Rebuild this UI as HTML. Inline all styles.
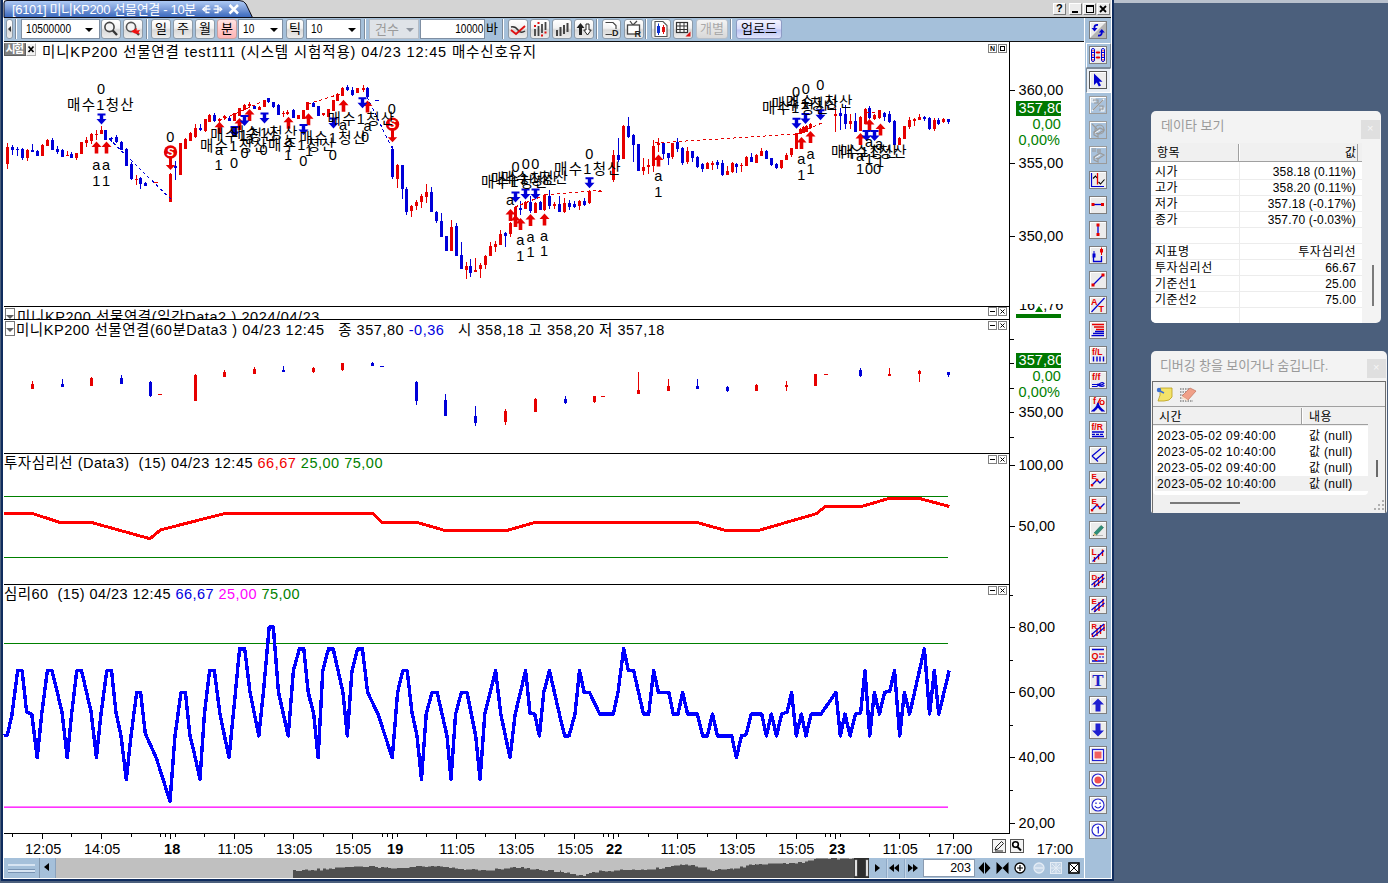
<!DOCTYPE html><html lang="ko"><head><meta charset="utf-8"><title>[6101] 미니KP200 선물연결 - 10분</title><style>
*{box-sizing:border-box}
html,body{margin:0;padding:0}
body{width:1388px;height:883px;overflow:hidden;position:relative;background:#4b5f7c;font-family:"Liberation Sans","Noto Sans CJK KR",sans-serif;font-size:12px;color:#000}
.a{position:absolute}
.t{position:absolute;white-space:nowrap;line-height:1}
.tb{position:absolute;top:19px;height:20px;border:1px solid #8c9aa8;border-radius:3px;background:linear-gradient(#ffffff,#f2f2f2 45%,#d9d9d9 55%,#ececec);text-align:center;font-size:13px;line-height:18px}
.inp{position:absolute;top:19px;height:20px;border:1px solid #7f8fa3;background:#fff;font-size:13px;line-height:18px}
.sep{position:absolute;top:19px;height:20px;width:2px;border-left:1px solid #7d8b9b;border-right:1px solid #fff}
.dd{position:absolute;width:0;height:0;border-left:4px solid transparent;border-right:4px solid transparent;border-top:4px solid #000;top:8px}
.rb{position:absolute;left:1089px;width:19px;height:19px;border:1px solid #808080;border-top-color:#fff;border-left-color:#fff;background:#e8e8e8}
.mx{position:absolute;width:9px;height:9px;border:1px solid #808080;background:#fff}
.ct{font-size:14.5px}
svg{position:absolute;left:0;top:0}
</style></head><body>
<div class="a" style="left:1114px;top:0;width:274px;height:3px;background:#b9c1cd"></div>
<div class="a" style="left:1px;top:0;width:1113px;height:881px;background:#0f2c5e"></div>
<div class="a" style="left:3px;top:0;width:1109px;height:879px;background:#fff"></div>
<div class="a" style="left:4px;top:0;width:1107px;height:17px;background:#d4d4d4"></div>
<div class="a" style="left:4px;top:17px;width:1107px;height:1px;background:#111"></div>
<div class="a" style="left:4px;top:18px;width:1080px;height:23px;background:#a5c0da"></div>
<div class="a" style="left:4px;top:41px;width:1080px;height:1px;background:#111"></div>
<div class="a" style="left:1085px;top:18px;width:26px;height:860px;background:#a5c0da"></div>
<div class="a" style="left:4px;top:858px;width:1080px;height:20px;background:#a5c0da"></div>
<svg width="260" height="18" viewBox="0 0 260 18"><defs><linearGradient id="tg" x1="0" y1="0" x2="0" y2="1"><stop offset="0" stop-color="#b0ccf6"/><stop offset="0.18" stop-color="#9dbbec"/><stop offset="0.5" stop-color="#7a9bd8"/><stop offset="0.8" stop-color="#4f7ac7"/><stop offset="1" stop-color="#3b68bd"/></linearGradient></defs><path d="M4,17.5 L4,3 Q4,0.5 7,0.5 L239,0.5 Q244,0.5 246,4 L252.5,17.5 Z" fill="url(#tg)" stroke="#0a0a14" stroke-width="1"/><g fill="none" stroke="#fff" stroke-width="1.3"><path d="M209.500,6h-3.500v6.500h3.500"/><path d="M214.500,6h3.500v6.500h-3.500"/><path d="M203,9.200h7.500M213.500,9.200h8"/><path d="M205,7.200l-2.200,2l2.200,2M219.500,7.200l2.200,2l-2.200,2"/></g><path d="M229.500,5 L238,13.500 M238,5 L229.500,13.500" stroke="#fff" stroke-width="2.500" fill="none"/></svg>
<div class="t" id="tabt" style="left:12px;top:2.5px;font-size:13px;color:#fff;letter-spacing:-0.326px">[6101] 미니KP200 선물연결 - 10분</div>
<div class="a" style="left:1053px;top:3px;width:13px;height:12px;background:#ececec;border:1px solid #fff;border-right-color:#7a7a7a;border-bottom-color:#7a7a7a"></div>
<div class="a" style="left:1069px;top:3px;width:13px;height:12px;background:#ececec;border:1px solid #fff;border-right-color:#7a7a7a;border-bottom-color:#7a7a7a"></div>
<div class="a" style="left:1083px;top:3px;width:13px;height:12px;background:#ececec;border:1px solid #fff;border-right-color:#7a7a7a;border-bottom-color:#7a7a7a"></div>
<div class="a" style="left:1097px;top:3px;width:13px;height:12px;background:#ececec;border:1px solid #fff;border-right-color:#7a7a7a;border-bottom-color:#7a7a7a"></div>
<div class="t" style="left:1056px;top:3px;font-size:11px;font-weight:bold">?</div>
<div class="a" style="left:1072px;top:11px;width:6px;height:2px;background:#000"></div>
<div class="a" style="left:1086px;top:5px;width:8px;height:8px;border:1px solid #000;border-top-width:2px"></div>
<svg width="1388" height="20" viewBox="0 0 1388 20"><path d="M1100,6 L1106,12 M1106,6 L1100,12" stroke="#000" stroke-width="1.8" fill="none"/></svg>
<div class="tb" style="left:6px;width:7px;border-radius:3px"></div>
<div class="a" style="left:8px;top:26px;width:0;height:0;border-top:3px solid transparent;border-bottom:3px solid transparent;border-right:3px solid #333"></div>
<div class="sep" style="left:15px"></div>
<div class="inp" style="left:21px;width:79px"><span class="t" style="left:3.5px;top:2.5px;font-size:12px;transform:scaleX(0.845);transform-origin:0 0" id="code">10500000</span><i class="dd" style="left:63px"></i></div>
<div class="tb" style="left:101px;width:20px;"><svg width="18" height="18" viewBox="0 0 18 18" style="left:0;top:0"><circle cx="7.5" cy="7" r="4.6" fill="#f4f4f4" stroke="#444" stroke-width="1.6"/><path d="M10.8,10.5 L15,15" stroke="#333" stroke-width="2.4"/></svg></div>
<div class="tb" style="left:123px;width:20px;"><svg width="18" height="18" viewBox="0 0 18 18" style="left:0;top:0"><circle cx="7" cy="7" r="4.6" fill="#f4f4f4" stroke="#555" stroke-width="1.6"/><path d="M10.5,10.5 L15,15" stroke="#444" stroke-width="2.2"/><path d="M7,11.5 L13,8 L12.5,10.5 L16,10 L14.5,12.5 L16,14 L11,13.5 Z" fill="#f01010"/></svg></div>
<div class="sep" style="left:146px"></div>
<div class="tb" style="left:151px;width:20px;">일</div>
<div class="tb" style="left:173px;width:20px;">주</div>
<div class="tb" style="left:195px;width:20px;">월</div>
<div class="tb" style="left:217px;width:20px;background:linear-gradient(#ffe3e3,#ffc9c9 50%,#ffb4b4);border-color:#c9a0a0">분</div>
<div class="inp" style="left:238px;width:45px"><span class="t" style="left:3.5px;top:2.5px;font-size:12px;transform:scaleX(0.845);transform-origin:0 0">10</span><i class="dd" style="left:31px"></i></div>
<div class="tb" style="left:286px;width:18px;">틱</div>
<div class="inp" style="left:306px;width:55px"><span class="t" style="left:3.5px;top:2.5px;font-size:12px;transform:scaleX(0.845);transform-origin:0 0">10</span><i class="dd" style="left:41px"></i></div>
<div class="sep" style="left:364px"></div>
<div class="inp" style="left:369px;width:50px;background:#dfe3e8;border-color:#b4bcc6"><span class="t" style="left:5px;top:3px;font-size:13px;color:#9a9a9a">건수</span><i class="dd" style="left:36px;border-top-color:#8f96a0"></i></div>
<div class="inp" style="left:420px;width:65px"><span class="t" style="right:1px;top:2.5px;font-size:12px;transform:scaleX(0.845);transform-origin:100% 0">10000</span></div>
<div class="t" style="left:486px;top:22px;font-size:13px">바</div>
<div class="sep" style="left:502px"></div>
<div class="tb" style="left:508px;width:20px;"><svg width="18" height="18" viewBox="0 0 18 18"><path d="M2,7 Q6,6 9,10 T16,11" fill="none" stroke="#333" stroke-width="1.4"/><path d="M2,10 L7,14 L16,6" fill="none" stroke="#e01010" stroke-width="1.8"/></svg></div>
<div class="tb" style="left:530px;width:20px;"><svg width="18" height="18" viewBox="0 0 18 18"><g stroke="#444" stroke-width="1.8"><path d="M4,9v7M7.5,6v10M11,4v9M14.5,2v8"/></g><g fill="#e01010"><rect x="3" y="5" width="2" height="2"/><rect x="6.5" y="2" width="2" height="2"/><rect x="10" y="14.5" width="2" height="2"/><rect x="13.5" y="11.5" width="2" height="2"/></g></svg></div>
<div class="tb" style="left:552px;width:20px;"><svg width="18" height="18" viewBox="0 0 18 18"><g stroke="#444" stroke-width="2"><path d="M4,10v6M7.5,7v9M11,5v9M14.5,3v9"/></g></svg></div>
<div class="tb" style="left:574px;width:20px;"><svg width="18" height="18" viewBox="0 0 18 18"><path d="M5.5,3 L9.5,8 H7 V15 H4 V8 H1.5 Z" fill="#222"/><path d="M12.5,15 L8.8,10 H11 V4 H14 V10 H16.2 Z" fill="#fff" stroke="#222" stroke-width="1"/></svg></div>
<div class="sep" style="left:596px"></div>
<div class="tb" style="left:602px;width:19px;"><svg width="18" height="18" viewBox="0 0 18 18"><path d="M2.5,2.5 H10 L13,5.5 V9 M9,14.5 H2.5 Z" fill="#fff" stroke="#444" stroke-width="1.2"/><text x="9" y="16" font-size="9" font-weight="bold" font-family="Liberation Sans,sans-serif" fill="#222">D</text></svg></div>
<div class="tb" style="left:624px;width:20px;"><svg width="18" height="18" viewBox="0 0 18 18"><path d="M5,1 L8,5 L12,1" fill="none" stroke="#444" stroke-width="1.2"/><rect x="2.5" y="5" width="12" height="9" fill="#fff" stroke="#444" stroke-width="1.3"/><text x="9.5" y="16.5" font-size="9" font-weight="bold" font-family="Liberation Sans,sans-serif" fill="#222">R</text></svg></div>
<div class="sep" style="left:645px"></div>
<div class="tb" style="left:651px;width:20px;"><svg width="18" height="18" viewBox="0 0 18 18"><path d="M3,1.5 H11 L15,5.5 V16.5 H3 Z" fill="#fff" stroke="#555" stroke-width="1.1"/><rect x="5" y="6" width="3" height="7" fill="#1030d0"/><path d="M6.5,3.5V15" stroke="#1030d0"/><rect x="10" y="7" width="3" height="5" fill="#e01010"/><path d="M11.5,5V14" stroke="#e01010"/></svg></div>
<div class="tb" style="left:673px;width:20px;"><svg width="18" height="18" viewBox="0 0 18 18"><rect x="2.5" y="2.5" width="11" height="10" fill="#fff" stroke="#333" stroke-width="1.2"/><path d="M2.5,6H13.5M2.5,9.5H13.5M6,2.5V12.5M10,2.5V12.5" stroke="#333" stroke-width="1"/><path d="M16.5,11.5 V16.5 H11.5 Z" fill="#e01010"/></svg></div>
<div class="tb" style="left:696px;width:32px;color:#a9a9a9;border-color:#b7bfc9;background:linear-gradient(#f3f3f3,#e6e6e6 50%,#d8d8d8)">개별</div>
<div class="sep" style="left:730px"></div>
<div class="tb" style="left:736px;width:46px;background:linear-gradient(#f4f4ff,#d9dcfb 50%,#bcc3f3 55%,#dfe3fb);border-color:#8e9bc4">업로드</div>
<div class="a" style="left:4px;top:42px;width:1080px;height:816px;background:#fff"></div>
<div class="a" style="left:4px;top:306px;width:1006px;height:1px;background:#000"></div>
<div class="a" style="left:4px;top:319px;width:1006px;height:1px;background:#000"></div>
<div class="a" style="left:4px;top:453px;width:1006px;height:1px;background:#000"></div>
<div class="a" style="left:4px;top:584px;width:1006px;height:1px;background:#000"></div>
<div class="a" style="left:4px;top:833px;width:1006px;height:1px;background:#000"></div>
<div class="a" style="left:1009px;top:42px;width:1px;height:792px;background:#000"></div>
<div class="mx" style="left:988px;top:307px"></div><div class="mx" style="left:998px;top:307px"></div>
<div class="a" style="left:990px;top:311px;width:5px;height:1px;background:#000"></div>
<svg width="1388" height="883" viewBox="0 0 1388 883" style="pointer-events:none"><path d="M1000.5,309.5 l4,4 m0,-4 l-4,4" stroke="#000" stroke-width="1" fill="none"/></svg>
<div class="mx" style="left:988px;top:321px"></div><div class="mx" style="left:998px;top:321px"></div>
<div class="a" style="left:990px;top:325px;width:5px;height:1px;background:#000"></div>
<svg width="1388" height="883" viewBox="0 0 1388 883" style="pointer-events:none"><path d="M1000.5,323.5 l4,4 m0,-4 l-4,4" stroke="#000" stroke-width="1" fill="none"/></svg>
<div class="mx" style="left:988px;top:455px"></div><div class="mx" style="left:998px;top:455px"></div>
<div class="a" style="left:990px;top:459px;width:5px;height:1px;background:#000"></div>
<svg width="1388" height="883" viewBox="0 0 1388 883" style="pointer-events:none"><path d="M1000.5,457.5 l4,4 m0,-4 l-4,4" stroke="#000" stroke-width="1" fill="none"/></svg>
<div class="mx" style="left:988px;top:586px"></div><div class="mx" style="left:998px;top:586px"></div>
<div class="a" style="left:990px;top:590px;width:5px;height:1px;background:#000"></div>
<svg width="1388" height="883" viewBox="0 0 1388 883" style="pointer-events:none"><path d="M1000.5,588.5 l4,4 m0,-4 l-4,4" stroke="#000" stroke-width="1" fill="none"/></svg>
<div class="mx" style="left:988px;top:44px"></div><div class="mx" style="left:998px;top:44px"></div>
<div class="t" style="left:990px;top:45px;font-size:7px;font-weight:bold">N</div>
<div class="a" style="left:1000px;top:46px;width:5px;height:5px;border:1px solid #000"></div>
<div class="a" style="left:4px;top:43px;width:22px;height:13px;background:#808080;border:1px solid #606060;border-top-color:#8c8c8c"></div>
<div class="t" style="left:5.5px;top:44px;font-size:11px;color:#fff;letter-spacing:-1.6px;font-weight:bold">시험</div>
<div class="a" style="left:26px;top:43px;width:10px;height:13px;background:#f2f2f2;border:1px solid #b0b0b0;border-top-color:#fff;border-left-color:#fff"></div>
<svg width="40" height="60" viewBox="0 0 40 60"><path d="M28.5,46.5 l5,5.500 m0,-5.500 l-5,5.500" stroke="#000" stroke-width="1.700" fill="none"/></svg>
<div class="t" id="t1" style="left:42px;top:44.8px;font-size:14.5px;color:#000;letter-spacing:0.843px;">미니KP200 선물연결 test111 (시스템 시험적용) 04/23 12:45 매수신호유지</div>
<div class="a" style="left:4px;top:307px;width:980px;height:12px;overflow:hidden"><div class="t" style="left:13px;top:2.5px;font-size:14.5px;letter-spacing:0.598px" id="t2">미니KP200 선물연결(일간Data2 ) 2024/04/23</div><div class="a" style="left:1px;top:1px;width:10px;height:14px;border:1px solid #777;background:#fff"></div><div class="a" style="left:2px;top:8px;width:0;height:0;border-left:4px solid transparent;border-right:4px solid transparent;border-top:4px solid #606060"></div></div>
<div class="a" style="left:5px;top:321px;width:10px;height:15px;border:1px solid #777;background:#fff"></div><div class="a" style="left:6px;top:328px;width:0;height:0;border-left:4px solid transparent;border-right:4px solid transparent;border-top:4.500px solid #606060"></div>
<div class="t" id="t3" style="left:16px;top:322.8px;font-size:14.5px;color:#000;letter-spacing:0.527px;">미니KP200 선물연결(60분Data3 ) 04/23 12:45&nbsp;&nbsp; 종 357,80 <span style="color:#0000e0">-0,36</span>&nbsp;&nbsp; 시 358,18 고 358,20 저 357,18</div>
<div class="t" id="t4" style="left:4px;top:456.2px;font-size:14.5px;color:#000;letter-spacing:0.499px;">투자심리선 (Data3) &nbsp;(15) 04/23 12:45 <span style="color:#f00000">66,67</span> <span style="color:#008000">25,00</span> <span style="color:#008000">75,00</span></div>
<div class="t" id="t5" style="left:4px;top:587.2px;font-size:14.5px;color:#000;letter-spacing:0.443px;">심리60 &nbsp;(15) 04/23 12:45 <span style="color:#0000e0">66,67</span> <span style="color:#ff00ff">25,00</span> <span style="color:#008000">75,00</span></div>
<div class="t" style="left:1018.5px;top:82.8px;font-size:14.5px;letter-spacing:0.1px;color:#000">360,00</div>
<div class="a" style="left:1010px;top:90px;width:5px;height:1px;background:#000"></div>
<div class="t" style="left:1018.5px;top:155.8px;font-size:14.5px;letter-spacing:0.1px;color:#000">355,00</div>
<div class="a" style="left:1010px;top:163px;width:5px;height:1px;background:#000"></div>
<div class="t" style="left:1018.5px;top:228.8px;font-size:14.5px;letter-spacing:0.1px;color:#000">350,00</div>
<div class="a" style="left:1010px;top:236px;width:5px;height:1px;background:#000"></div>
<div class="a" style="left:1016px;top:101px;width:45px;height:15px;background:#007800"></div>
<div class="t" style="left:1018.5px;top:100.8px;font-size:14.5px;letter-spacing:0.1px;color:#fff">357,80</div>
<div class="t" style="right:327px;top:116.8px;font-size:14.5px;letter-spacing:0.1px;color:#008000">0,00</div>
<div class="t" style="left:1018.5px;top:132.8px;font-size:14.5px;letter-spacing:0.1px;color:#008000">0,00%</div>
<div class="a" style="left:1012px;top:304px;width:60px;height:8.5px;overflow:hidden"><div class="t" style="left:7px;top:-6px;font-size:14.5px">162,76</div></div>
<div class="a" style="left:1016px;top:314px;width:45px;height:4px;background:#007800"></div>
<div class="a" style="left:1035px;top:305px;width:9px;height:8px;background:#fff"></div><div class="a" style="left:1035px;top:306px;width:0;height:0;border-left:4px solid transparent;border-right:4px solid transparent;border-bottom:6px solid #008000"></div>
<div class="a" style="left:1010px;top:339px;width:4px;height:1px;background:#000"></div>
<div class="a" style="left:1010px;top:363px;width:4px;height:1px;background:#000"></div>
<div class="a" style="left:1010px;top:388px;width:4px;height:1px;background:#000"></div>
<div class="a" style="left:1010px;top:412px;width:4px;height:1px;background:#000"></div>
<div class="a" style="left:1010px;top:437px;width:4px;height:1px;background:#000"></div>
<div class="a" style="left:1016px;top:353px;width:45px;height:15px;background:#007800"></div>
<div class="t" style="left:1018.5px;top:352.8px;font-size:14.5px;letter-spacing:0.1px;color:#fff">357,80</div>
<div class="t" style="right:327px;top:368.8px;font-size:14.5px;letter-spacing:0.1px;color:#008000">0,00</div>
<div class="t" style="left:1018.5px;top:384.8px;font-size:14.5px;letter-spacing:0.1px;color:#008000">0,00%</div>
<div class="t" style="left:1018.5px;top:404.8px;font-size:14.5px;letter-spacing:0.1px;color:#000">350,00</div>
<div class="t" style="left:1018.5px;top:457.8px;font-size:14.5px;letter-spacing:0.1px;color:#000">100,00</div>
<div class="a" style="left:1010px;top:465px;width:5px;height:1px;background:#000"></div>
<div class="t" style="left:1018.5px;top:518.8px;font-size:14.5px;letter-spacing:0.1px;color:#000">50,00</div>
<div class="a" style="left:1010px;top:526px;width:5px;height:1px;background:#000"></div>
<div class="t" style="display:none"></div>
<div class="t" style="left:1018.5px;top:619.8px;font-size:14.5px;letter-spacing:0.1px;color:#000">80,00</div>
<div class="a" style="left:1010px;top:627px;width:5px;height:1px;background:#000"></div>
<div class="t" style="left:1018.5px;top:684.8px;font-size:14.5px;letter-spacing:0.1px;color:#000">60,00</div>
<div class="a" style="left:1010px;top:692px;width:5px;height:1px;background:#000"></div>
<div class="t" style="left:1018.5px;top:749.8px;font-size:14.5px;letter-spacing:0.1px;color:#000">40,00</div>
<div class="a" style="left:1010px;top:757px;width:5px;height:1px;background:#000"></div>
<div class="t" style="left:1018.5px;top:815.8px;font-size:14.5px;letter-spacing:0.1px;color:#000">20,00</div>
<div class="a" style="left:1010px;top:823px;width:5px;height:1px;background:#000"></div>
<div class="a" style="left:1010px;top:595px;width:3px;height:1px;background:#000"></div>
<div class="a" style="left:1010px;top:660px;width:3px;height:1px;background:#000"></div>
<div class="a" style="left:1010px;top:725px;width:3px;height:1px;background:#000"></div>
<div class="a" style="left:1010px;top:790px;width:3px;height:1px;background:#000"></div>
<div class="t" style="left:43.2px;transform:translateX(-50%);top:841.8px;font-size:14.5px;color:#000;">12:05</div>
<div class="t" style="left:102.2px;transform:translateX(-50%);top:841.8px;font-size:14.5px;color:#000;">14:05</div>
<div class="t" style="left:172.2px;transform:translateX(-50%);top:841.8px;font-size:14.5px;color:#000;font-weight:bold;">18</div>
<div class="t" style="left:235.2px;transform:translateX(-50%);top:841.8px;font-size:14.5px;color:#000;">11:05</div>
<div class="t" style="left:294.2px;transform:translateX(-50%);top:841.8px;font-size:14.5px;color:#000;">13:05</div>
<div class="t" style="left:353.2px;transform:translateX(-50%);top:841.8px;font-size:14.5px;color:#000;">15:05</div>
<div class="t" style="left:395.2px;transform:translateX(-50%);top:841.8px;font-size:14.5px;color:#000;font-weight:bold;">19</div>
<div class="t" style="left:457.2px;transform:translateX(-50%);top:841.8px;font-size:14.5px;color:#000;">11:05</div>
<div class="t" style="left:516.2px;transform:translateX(-50%);top:841.8px;font-size:14.5px;color:#000;">13:05</div>
<div class="t" style="left:575.2px;transform:translateX(-50%);top:841.8px;font-size:14.5px;color:#000;">15:05</div>
<div class="t" style="left:614.2px;transform:translateX(-50%);top:841.8px;font-size:14.5px;color:#000;font-weight:bold;">22</div>
<div class="t" style="left:678.2px;transform:translateX(-50%);top:841.8px;font-size:14.5px;color:#000;">11:05</div>
<div class="t" style="left:737.2px;transform:translateX(-50%);top:841.8px;font-size:14.5px;color:#000;">13:05</div>
<div class="t" style="left:796.2px;transform:translateX(-50%);top:841.8px;font-size:14.5px;color:#000;">15:05</div>
<div class="t" style="left:837.2px;transform:translateX(-50%);top:841.8px;font-size:14.5px;color:#000;font-weight:bold;">23</div>
<div class="t" style="left:900.2px;transform:translateX(-50%);top:841.8px;font-size:14.5px;color:#000;">11:05</div>
<div class="t" style="left:954.2px;transform:translateX(-50%);top:841.8px;font-size:14.5px;color:#000;">17:00</div>
<div class="t" style="left:1055px;transform:translateX(-50%);top:841.8px;font-size:14.5px;color:#000;">17:00</div>
<svg width="1388" height="883" viewBox="0 0 1388 883" shape-rendering="crispEdges"><rect x="42" y="834" width="1" height="5" fill="#000"/><rect x="101" y="834" width="1" height="5" fill="#000"/><rect x="170" y="834" width="1" height="5" fill="#000"/><rect x="234" y="834" width="1" height="5" fill="#000"/><rect x="293" y="834" width="1" height="5" fill="#000"/><rect x="352" y="834" width="1" height="5" fill="#000"/><rect x="392" y="834" width="1" height="5" fill="#000"/><rect x="456" y="834" width="1" height="5" fill="#000"/><rect x="515" y="834" width="1" height="5" fill="#000"/><rect x="574" y="834" width="1" height="5" fill="#000"/><rect x="613" y="834" width="1" height="5" fill="#000"/><rect x="677" y="834" width="1" height="5" fill="#000"/><rect x="736" y="834" width="1" height="5" fill="#000"/><rect x="796" y="834" width="1" height="5" fill="#000"/><rect x="835" y="834" width="1" height="5" fill="#000"/><rect x="899" y="834" width="1" height="5" fill="#000"/><rect x="953" y="834" width="1" height="5" fill="#000"/><rect x="12" y="834" width="1" height="3" fill="#000"/><rect x="71" y="834" width="1" height="3" fill="#000"/><rect x="131" y="834" width="1" height="3" fill="#000"/><rect x="160" y="834" width="1" height="3" fill="#000"/><rect x="165" y="834" width="1" height="3" fill="#000"/><rect x="175" y="834" width="1" height="3" fill="#000"/><rect x="204" y="834" width="1" height="3" fill="#000"/><rect x="264" y="834" width="1" height="3" fill="#000"/><rect x="323" y="834" width="1" height="3" fill="#000"/><rect x="382" y="834" width="1" height="3" fill="#000"/><rect x="387" y="834" width="1" height="3" fill="#000"/><rect x="397" y="834" width="1" height="3" fill="#000"/><rect x="426" y="834" width="1" height="3" fill="#000"/><rect x="485" y="834" width="1" height="3" fill="#000"/><rect x="544" y="834" width="1" height="3" fill="#000"/><rect x="603" y="834" width="1" height="3" fill="#000"/><rect x="608" y="834" width="1" height="3" fill="#000"/><rect x="618" y="834" width="1" height="3" fill="#000"/><rect x="648" y="834" width="1" height="3" fill="#000"/><rect x="707" y="834" width="1" height="3" fill="#000"/><rect x="766" y="834" width="1" height="3" fill="#000"/><rect x="825" y="834" width="1" height="3" fill="#000"/><rect x="830" y="834" width="1" height="3" fill="#000"/><rect x="840" y="834" width="1" height="3" fill="#000"/><rect x="869" y="834" width="1" height="3" fill="#000"/><rect x="929" y="834" width="1" height="3" fill="#000"/><rect x="7" y="143.0" width="1" height="25.6" fill="#e60000"/><rect x="6" y="147.3" width="3" height="17.0" fill="#e60000"/><rect x="12" y="144.8" width="1" height="10.2" fill="#0000d8"/><rect x="11" y="147.3" width="3" height="2.9" fill="#0000d8"/><rect x="17" y="146.5" width="1" height="9.3" fill="#0000d8"/><rect x="16" y="148.5" width="3" height="1.5" fill="#0000d8"/><rect x="22" y="148.0" width="1" height="12.0" fill="#0000d8"/><rect x="21" y="148.5" width="3" height="9.9" fill="#0000d8"/><rect x="27" y="148.5" width="1" height="12.5" fill="#e60000"/><rect x="26" y="149.9" width="3" height="8.1" fill="#e60000"/><rect x="32" y="143.9" width="1" height="8.5" fill="#0000d8"/><rect x="31" y="149.9" width="3" height="2.5" fill="#0000d8"/><rect x="37" y="150.0" width="1" height="5.5" fill="#0000d8"/><rect x="36" y="151.2" width="3" height="4.3" fill="#0000d8"/><rect x="42" y="144.0" width="1" height="11.5" fill="#e60000"/><rect x="41" y="144.8" width="3" height="10.7" fill="#e60000"/><rect x="47" y="138.8" width="1" height="6.8" fill="#e60000"/><rect x="46" y="139.7" width="3" height="5.9" fill="#e60000"/><rect x="52" y="138.0" width="1" height="11.5" fill="#0000d8"/><rect x="51" y="139.7" width="3" height="9.8" fill="#0000d8"/><rect x="57" y="146.0" width="1" height="8.0" fill="#0000d8"/><rect x="56" y="148.5" width="3" height="3.5" fill="#0000d8"/><rect x="62" y="149.0" width="1" height="7.7" fill="#0000d8"/><rect x="61" y="149.5" width="3" height="7.2" fill="#0000d8"/><rect x="67" y="151.0" width="1" height="5.3" fill="#e60000"/><rect x="66" y="155.0" width="3" height="1.3" fill="#e60000"/><rect x="71" y="152.0" width="1" height="5.5" fill="#0000d8"/><rect x="70" y="154.0" width="3" height="3.5" fill="#0000d8"/><rect x="76" y="153.0" width="1" height="6.7" fill="#e60000"/><rect x="75" y="153.0" width="3" height="5.0" fill="#e60000"/><rect x="81" y="142.0" width="1" height="11.6" fill="#e60000"/><rect x="80" y="142.2" width="3" height="11.4" fill="#e60000"/><rect x="86" y="136.6" width="1" height="9.9" fill="#e60000"/><rect x="85" y="139.7" width="3" height="3.7" fill="#e60000"/><rect x="91" y="133.0" width="1" height="11.0" fill="#e60000"/><rect x="90" y="133.7" width="3" height="7.7" fill="#e60000"/><rect x="96" y="129.5" width="1" height="10.2" fill="#e60000"/><rect x="95" y="133.5" width="3" height="1.2" fill="#e60000"/><rect x="101" y="126.0" width="1" height="7.7" fill="#e60000"/><rect x="100" y="130.3" width="3" height="3.4" fill="#e60000"/><rect x="105" y="130.0" width="1" height="9.7" fill="#0000d8"/><rect x="104" y="130.3" width="3" height="9.4" fill="#0000d8"/><rect x="111" y="137.0" width="1" height="5.0" fill="#0000d8"/><rect x="110" y="138.0" width="3" height="1.2" fill="#0000d8"/><rect x="116" y="134.6" width="1" height="8.4" fill="#0000d8"/><rect x="115" y="137.0" width="3" height="5.0" fill="#0000d8"/><rect x="121" y="141.0" width="1" height="8.9" fill="#0000d8"/><rect x="120" y="142.2" width="3" height="7.7" fill="#0000d8"/><rect x="126" y="148.0" width="1" height="17.5" fill="#0000d8"/><rect x="125" y="148.5" width="3" height="17.0" fill="#0000d8"/><rect x="131" y="162.0" width="1" height="17.5" fill="#0000d8"/><rect x="130" y="164.3" width="3" height="14.4" fill="#0000d8"/><rect x="136" y="175.4" width="1" height="9.3" fill="#e60000"/><rect x="135" y="178.5" width="3" height="1.5" fill="#e60000"/><rect x="140" y="177.0" width="1" height="11.6" fill="#0000d8"/><rect x="139" y="178.4" width="3" height="5.8" fill="#0000d8"/><rect x="145" y="182.0" width="1" height="4.4" fill="#0000d8"/><rect x="144" y="183.0" width="3" height="2.5" fill="#0000d8"/><rect x="170" y="173.0" width="1" height="28.7" fill="#e60000"/><rect x="169" y="173.6" width="3" height="28.1" fill="#e60000"/><rect x="175" y="160.9" width="1" height="18.7" fill="#0000d8"/><rect x="174" y="166.0" width="3" height="2.0" fill="#0000d8"/><rect x="180" y="143.0" width="1" height="32.4" fill="#e60000"/><rect x="179" y="143.0" width="3" height="32.4" fill="#e60000"/><rect x="185" y="138.0" width="1" height="11.0" fill="#e60000"/><rect x="184" y="138.8" width="3" height="10.2" fill="#e60000"/><rect x="190" y="132.0" width="1" height="9.4" fill="#e60000"/><rect x="189" y="132.9" width="3" height="8.5" fill="#e60000"/><rect x="195" y="123.5" width="1" height="14.0" fill="#e60000"/><rect x="194" y="127.8" width="3" height="9.3" fill="#e60000"/><rect x="200" y="124.4" width="1" height="6.8" fill="#0000d8"/><rect x="199" y="127.8" width="3" height="2.5" fill="#0000d8"/><rect x="205" y="118.5" width="1" height="13.5" fill="#e60000"/><rect x="204" y="119.3" width="3" height="11.9" fill="#e60000"/><rect x="209" y="114.0" width="1" height="7.8" fill="#e60000"/><rect x="208" y="114.5" width="3" height="7.3" fill="#e60000"/><rect x="214" y="112.8" width="1" height="9.0" fill="#0000d8"/><rect x="213" y="114.5" width="3" height="6.5" fill="#0000d8"/><rect x="219" y="117.6" width="1" height="5.1" fill="#e60000"/><rect x="218" y="119.0" width="3" height="1.5" fill="#e60000"/><rect x="224" y="114.5" width="1" height="5.5" fill="#e60000"/><rect x="223" y="116.0" width="3" height="1.5" fill="#e60000"/><rect x="229" y="116.0" width="1" height="5.3" fill="#0000d8"/><rect x="228" y="117.6" width="3" height="3.7" fill="#0000d8"/><rect x="234" y="113.0" width="1" height="8.0" fill="#e60000"/><rect x="233" y="113.3" width="3" height="7.7" fill="#e60000"/><rect x="239" y="108.0" width="1" height="7.9" fill="#e60000"/><rect x="238" y="108.2" width="3" height="7.7" fill="#e60000"/><rect x="244" y="104.0" width="1" height="6.0" fill="#e60000"/><rect x="243" y="104.8" width="3" height="5.2" fill="#e60000"/><rect x="249" y="102.3" width="1" height="5.9" fill="#e60000"/><rect x="248" y="104.0" width="3" height="2.0" fill="#e60000"/><rect x="254" y="105.0" width="1" height="4.4" fill="#0000d8"/><rect x="253" y="106.0" width="3" height="3.4" fill="#0000d8"/><rect x="259" y="106.0" width="1" height="4.0" fill="#e60000"/><rect x="258" y="106.5" width="3" height="3.5" fill="#e60000"/><rect x="264" y="100.0" width="1" height="7.4" fill="#e60000"/><rect x="263" y="100.6" width="3" height="6.8" fill="#e60000"/><rect x="268" y="97.5" width="1" height="5.5" fill="#0000d8"/><rect x="267" y="98.0" width="3" height="4.3" fill="#0000d8"/><rect x="273" y="102.0" width="1" height="5.5" fill="#0000d8"/><rect x="272" y="102.3" width="3" height="4.2" fill="#0000d8"/><rect x="278" y="104.0" width="1" height="10.5" fill="#0000d8"/><rect x="277" y="104.8" width="3" height="9.7" fill="#0000d8"/><rect x="283" y="110.8" width="1" height="5.9" fill="#e60000"/><rect x="282" y="112.5" width="3" height="1.5" fill="#e60000"/><rect x="287" y="110.0" width="1" height="5.0" fill="#e60000"/><rect x="286" y="112.0" width="3" height="1.5" fill="#e60000"/><rect x="293" y="109.0" width="1" height="9.4" fill="#0000d8"/><rect x="292" y="110.0" width="3" height="8.4" fill="#0000d8"/><rect x="298" y="115.0" width="1" height="4.3" fill="#e60000"/><rect x="297" y="115.0" width="3" height="4.3" fill="#e60000"/><rect x="303" y="110.0" width="1" height="9.3" fill="#e60000"/><rect x="302" y="110.0" width="3" height="9.3" fill="#e60000"/><rect x="307" y="102.0" width="1" height="8.0" fill="#e60000"/><rect x="306" y="102.3" width="3" height="7.7" fill="#e60000"/><rect x="313" y="102.0" width="1" height="5.4" fill="#0000d8"/><rect x="312" y="103.0" width="3" height="4.4" fill="#0000d8"/><rect x="318" y="106.0" width="1" height="10.2" fill="#0000d8"/><rect x="317" y="106.0" width="3" height="10.2" fill="#0000d8"/><rect x="323" y="112.5" width="1" height="3.7" fill="#e60000"/><rect x="322" y="113.0" width="3" height="2.0" fill="#e60000"/><rect x="328" y="109.0" width="1" height="7.7" fill="#e60000"/><rect x="327" y="109.0" width="3" height="7.7" fill="#e60000"/><rect x="333" y="99.7" width="1" height="11.1" fill="#e60000"/><rect x="332" y="99.7" width="3" height="11.1" fill="#e60000"/><rect x="337" y="93.0" width="1" height="7.6" fill="#e60000"/><rect x="336" y="93.8" width="3" height="6.8" fill="#e60000"/><rect x="342" y="87.0" width="1" height="8.5" fill="#e60000"/><rect x="341" y="87.8" width="3" height="7.7" fill="#e60000"/><rect x="347" y="85.3" width="1" height="5.9" fill="#0000d8"/><rect x="346" y="87.0" width="3" height="2.5" fill="#0000d8"/><rect x="352" y="87.0" width="1" height="8.5" fill="#0000d8"/><rect x="351" y="90.4" width="3" height="4.2" fill="#0000d8"/><rect x="357" y="87.8" width="1" height="5.2" fill="#e60000"/><rect x="356" y="87.8" width="3" height="5.2" fill="#e60000"/><rect x="363" y="85.3" width="1" height="6.7" fill="#e60000"/><rect x="362" y="88.0" width="3" height="2.0" fill="#e60000"/><rect x="367" y="87.0" width="1" height="10.2" fill="#0000d8"/><rect x="366" y="87.8" width="3" height="9.4" fill="#0000d8"/><rect x="392" y="145.7" width="1" height="33.6" fill="#0000d8"/><rect x="391" y="148.7" width="3" height="28.6" fill="#0000d8"/><rect x="397" y="164.0" width="1" height="23.5" fill="#e60000"/><rect x="396" y="165.0" width="3" height="14.3" fill="#e60000"/><rect x="402" y="165.0" width="1" height="33.7" fill="#0000d8"/><rect x="401" y="165.0" width="3" height="23.5" fill="#0000d8"/><rect x="406" y="186.5" width="1" height="28.5" fill="#0000d8"/><rect x="405" y="188.5" width="3" height="23.5" fill="#0000d8"/><rect x="411" y="204.8" width="1" height="12.2" fill="#e60000"/><rect x="410" y="205.8" width="3" height="5.2" fill="#e60000"/><rect x="416" y="199.7" width="1" height="10.2" fill="#e60000"/><rect x="415" y="201.7" width="3" height="4.5" fill="#e60000"/><rect x="421" y="193.6" width="1" height="14.2" fill="#e60000"/><rect x="420" y="195.6" width="3" height="6.1" fill="#e60000"/><rect x="426" y="184.4" width="1" height="18.4" fill="#e60000"/><rect x="425" y="191.5" width="3" height="5.1" fill="#e60000"/><rect x="431" y="187.0" width="1" height="25.0" fill="#0000d8"/><rect x="430" y="191.5" width="3" height="20.5" fill="#0000d8"/><rect x="436" y="211.0" width="1" height="11.5" fill="#0000d8"/><rect x="435" y="211.5" width="3" height="9.5" fill="#0000d8"/><rect x="441" y="213.0" width="1" height="24.4" fill="#0000d8"/><rect x="440" y="221.0" width="3" height="16.4" fill="#0000d8"/><rect x="446" y="236.0" width="1" height="15.3" fill="#0000d8"/><rect x="445" y="236.4" width="3" height="14.9" fill="#0000d8"/><rect x="451" y="220.0" width="1" height="31.3" fill="#e60000"/><rect x="450" y="226.6" width="3" height="24.7" fill="#e60000"/><rect x="456" y="223.0" width="1" height="33.4" fill="#0000d8"/><rect x="455" y="226.2" width="3" height="30.2" fill="#0000d8"/><rect x="461" y="242.0" width="1" height="27.4" fill="#0000d8"/><rect x="460" y="255.0" width="3" height="14.4" fill="#0000d8"/><rect x="466" y="262.0" width="1" height="16.8" fill="#e60000"/><rect x="465" y="266.0" width="3" height="4.0" fill="#e60000"/><rect x="470" y="258.8" width="1" height="18.0" fill="#0000d8"/><rect x="469" y="266.0" width="3" height="7.0" fill="#0000d8"/><rect x="475" y="258.0" width="1" height="14.0" fill="#e60000"/><rect x="474" y="270.0" width="3" height="2.0" fill="#e60000"/><rect x="480" y="263.0" width="1" height="14.6" fill="#e60000"/><rect x="479" y="265.0" width="3" height="4.0" fill="#e60000"/><rect x="485" y="255.0" width="1" height="14.0" fill="#e60000"/><rect x="484" y="255.8" width="3" height="9.2" fill="#e60000"/><rect x="490" y="242.0" width="1" height="14.4" fill="#e60000"/><rect x="489" y="246.2" width="3" height="10.2" fill="#e60000"/><rect x="495" y="240.5" width="1" height="11.2" fill="#e60000"/><rect x="494" y="243.5" width="3" height="3.5" fill="#e60000"/><rect x="500" y="230.3" width="1" height="14.3" fill="#e60000"/><rect x="499" y="234.4" width="3" height="10.2" fill="#e60000"/><rect x="505" y="232.0" width="1" height="14.6" fill="#0000d8"/><rect x="504" y="233.3" width="3" height="3.1" fill="#0000d8"/><rect x="510" y="221.7" width="1" height="15.7" fill="#e60000"/><rect x="509" y="223.0" width="3" height="11.4" fill="#e60000"/><rect x="515" y="206.0" width="1" height="20.2" fill="#e60000"/><rect x="514" y="206.8" width="3" height="19.4" fill="#e60000"/><rect x="520" y="201.3" width="1" height="13.7" fill="#0000d8"/><rect x="519" y="208.0" width="3" height="2.0" fill="#0000d8"/><rect x="525" y="201.0" width="1" height="7.9" fill="#e60000"/><rect x="524" y="201.7" width="3" height="7.2" fill="#e60000"/><rect x="530" y="195.6" width="1" height="17.4" fill="#0000d8"/><rect x="529" y="201.7" width="3" height="9.3" fill="#0000d8"/><rect x="535" y="202.0" width="1" height="11.0" fill="#e60000"/><rect x="534" y="202.8" width="3" height="10.2" fill="#e60000"/><rect x="540" y="201.0" width="1" height="9.0" fill="#0000d8"/><rect x="539" y="201.7" width="3" height="8.3" fill="#0000d8"/><rect x="544" y="193.6" width="1" height="17.4" fill="#e60000"/><rect x="543" y="194.6" width="3" height="15.4" fill="#e60000"/><rect x="549" y="189.5" width="1" height="19.4" fill="#0000d8"/><rect x="548" y="195.6" width="3" height="10.2" fill="#0000d8"/><rect x="554" y="201.7" width="1" height="7.2" fill="#e60000"/><rect x="553" y="204.0" width="3" height="1.5" fill="#e60000"/><rect x="559" y="195.6" width="1" height="15.9" fill="#0000d8"/><rect x="558" y="204.2" width="3" height="7.3" fill="#0000d8"/><rect x="564" y="197.7" width="1" height="15.3" fill="#e60000"/><rect x="563" y="202.8" width="3" height="8.7" fill="#e60000"/><rect x="569" y="199.7" width="1" height="9.8" fill="#0000d8"/><rect x="568" y="202.8" width="3" height="4.0" fill="#0000d8"/><rect x="574" y="201.0" width="1" height="7.3" fill="#0000d8"/><rect x="573" y="203.8" width="3" height="3.0" fill="#0000d8"/><rect x="579" y="200.0" width="1" height="9.7" fill="#e60000"/><rect x="578" y="200.9" width="3" height="5.1" fill="#e60000"/><rect x="584" y="198.0" width="1" height="8.0" fill="#0000d8"/><rect x="583" y="200.9" width="3" height="3.7" fill="#0000d8"/><rect x="589" y="190.0" width="1" height="13.5" fill="#e60000"/><rect x="588" y="190.6" width="3" height="12.4" fill="#e60000"/><rect x="613" y="150.0" width="1" height="31.7" fill="#e60000"/><rect x="612" y="155.2" width="3" height="24.3" fill="#e60000"/><rect x="618" y="138.0" width="1" height="23.9" fill="#0000d8"/><rect x="617" y="155.2" width="3" height="4.4" fill="#0000d8"/><rect x="623" y="125.0" width="1" height="33.9" fill="#e60000"/><rect x="622" y="125.8" width="3" height="33.1" fill="#e60000"/><rect x="628" y="117.0" width="1" height="21.0" fill="#0000d8"/><rect x="627" y="125.8" width="3" height="11.0" fill="#0000d8"/><rect x="633" y="134.0" width="1" height="27.9" fill="#0000d8"/><rect x="632" y="135.3" width="3" height="9.7" fill="#0000d8"/><rect x="638" y="144.0" width="1" height="26.7" fill="#0000d8"/><rect x="637" y="144.2" width="3" height="26.5" fill="#0000d8"/><rect x="643" y="158.2" width="1" height="16.8" fill="#e60000"/><rect x="642" y="167.0" width="3" height="3.7" fill="#e60000"/><rect x="648" y="159.0" width="1" height="15.4" fill="#e60000"/><rect x="647" y="165.0" width="3" height="1.5" fill="#e60000"/><rect x="653" y="139.8" width="1" height="32.2" fill="#e60000"/><rect x="652" y="146.4" width="3" height="19.1" fill="#e60000"/><rect x="658" y="137.6" width="1" height="13.9" fill="#e60000"/><rect x="657" y="143.0" width="3" height="2.0" fill="#e60000"/><rect x="663" y="143.0" width="1" height="15.9" fill="#0000d8"/><rect x="662" y="143.4" width="3" height="10.4" fill="#0000d8"/><rect x="668" y="153.0" width="1" height="11.8" fill="#0000d8"/><rect x="667" y="153.3" width="3" height="4.9" fill="#0000d8"/><rect x="672" y="143.0" width="1" height="15.5" fill="#e60000"/><rect x="671" y="143.4" width="3" height="14.0" fill="#e60000"/><rect x="677" y="138.0" width="1" height="13.5" fill="#0000d8"/><rect x="676" y="142.0" width="3" height="6.6" fill="#0000d8"/><rect x="682" y="147.0" width="1" height="17.8" fill="#0000d8"/><rect x="681" y="147.9" width="3" height="14.7" fill="#0000d8"/><rect x="687" y="147.2" width="1" height="16.4" fill="#e60000"/><rect x="686" y="150.8" width="3" height="11.1" fill="#e60000"/><rect x="692" y="151.0" width="1" height="10.9" fill="#0000d8"/><rect x="691" y="151.0" width="3" height="6.7" fill="#0000d8"/><rect x="697" y="156.0" width="1" height="11.5" fill="#0000d8"/><rect x="696" y="156.7" width="3" height="10.3" fill="#0000d8"/><rect x="702" y="162.6" width="1" height="9.3" fill="#0000d8"/><rect x="701" y="164.0" width="3" height="4.5" fill="#0000d8"/><rect x="707" y="161.5" width="1" height="7.5" fill="#e60000"/><rect x="706" y="162.6" width="3" height="6.4" fill="#e60000"/><rect x="712" y="161.0" width="1" height="9.0" fill="#e60000"/><rect x="711" y="163.0" width="3" height="1.5" fill="#e60000"/><rect x="717" y="160.0" width="1" height="8.5" fill="#0000d8"/><rect x="716" y="161.9" width="3" height="2.9" fill="#0000d8"/><rect x="722" y="160.0" width="1" height="15.8" fill="#0000d8"/><rect x="721" y="162.6" width="3" height="12.4" fill="#0000d8"/><rect x="727" y="165.5" width="1" height="9.3" fill="#e60000"/><rect x="726" y="171.0" width="3" height="3.8" fill="#e60000"/><rect x="732" y="162.0" width="1" height="11.0" fill="#e60000"/><rect x="731" y="163.3" width="3" height="8.9" fill="#e60000"/><rect x="736" y="163.3" width="1" height="9.7" fill="#0000d8"/><rect x="735" y="164.0" width="3" height="3.0" fill="#0000d8"/><rect x="741" y="163.3" width="1" height="8.6" fill="#e60000"/><rect x="740" y="164.8" width="3" height="1.5" fill="#e60000"/><rect x="746" y="156.0" width="1" height="9.5" fill="#e60000"/><rect x="745" y="156.7" width="3" height="8.8" fill="#e60000"/><rect x="751" y="153.0" width="1" height="8.6" fill="#0000d8"/><rect x="750" y="156.7" width="3" height="4.9" fill="#0000d8"/><rect x="756" y="154.0" width="1" height="9.3" fill="#e60000"/><rect x="755" y="154.5" width="3" height="8.1" fill="#e60000"/><rect x="761" y="148.3" width="1" height="7.7" fill="#e60000"/><rect x="760" y="150.8" width="3" height="5.2" fill="#e60000"/><rect x="766" y="150.0" width="1" height="8.6" fill="#0000d8"/><rect x="765" y="150.8" width="3" height="7.8" fill="#0000d8"/><rect x="771" y="157.5" width="1" height="8.0" fill="#0000d8"/><rect x="770" y="158.2" width="3" height="6.6" fill="#0000d8"/><rect x="776" y="163.0" width="1" height="5.5" fill="#0000d8"/><rect x="775" y="164.0" width="3" height="3.8" fill="#0000d8"/><rect x="781" y="160.0" width="1" height="8.5" fill="#e60000"/><rect x="780" y="160.4" width="3" height="7.4" fill="#e60000"/><rect x="786" y="153.0" width="1" height="7.4" fill="#e60000"/><rect x="785" y="154.5" width="3" height="5.9" fill="#e60000"/><rect x="791" y="147.5" width="1" height="9.2" fill="#e60000"/><rect x="790" y="148.3" width="3" height="7.0" fill="#e60000"/><rect x="796" y="133.0" width="1" height="15.6" fill="#e60000"/><rect x="795" y="133.2" width="3" height="15.4" fill="#e60000"/><rect x="800" y="128.0" width="1" height="6.0" fill="#e60000"/><rect x="799" y="129.0" width="3" height="5.0" fill="#e60000"/><rect x="803" y="126.0" width="1" height="7.0" fill="#e60000"/><rect x="802" y="126.5" width="3" height="6.5" fill="#e60000"/><rect x="806" y="125.0" width="1" height="6.7" fill="#e60000"/><rect x="805" y="125.8" width="3" height="5.9" fill="#e60000"/><rect x="810" y="122.8" width="1" height="6.2" fill="#e60000"/><rect x="809" y="123.6" width="3" height="4.4" fill="#e60000"/><rect x="835" y="108.0" width="1" height="23.7" fill="#e60000"/><rect x="834" y="114.0" width="3" height="1.5" fill="#e60000"/><rect x="840" y="108.0" width="1" height="21.5" fill="#0000d8"/><rect x="839" y="113.0" width="3" height="2.5" fill="#0000d8"/><rect x="845" y="105.0" width="1" height="23.8" fill="#0000d8"/><rect x="844" y="114.0" width="3" height="9.6" fill="#0000d8"/><rect x="850" y="114.0" width="1" height="14.8" fill="#e60000"/><rect x="849" y="121.4" width="3" height="2.9" fill="#e60000"/><rect x="855" y="113.0" width="1" height="18.7" fill="#0000d8"/><rect x="854" y="121.0" width="3" height="10.7" fill="#0000d8"/><rect x="860" y="116.0" width="1" height="15.0" fill="#e60000"/><rect x="859" y="117.0" width="3" height="14.0" fill="#e60000"/><rect x="865" y="108.0" width="1" height="15.6" fill="#e60000"/><rect x="864" y="108.6" width="3" height="15.0" fill="#e60000"/><rect x="869" y="106.0" width="1" height="12.5" fill="#0000d8"/><rect x="868" y="108.0" width="3" height="9.7" fill="#0000d8"/><rect x="874" y="114.0" width="1" height="6.0" fill="#e60000"/><rect x="873" y="114.8" width="3" height="4.4" fill="#e60000"/><rect x="879" y="109.5" width="1" height="9.0" fill="#e60000"/><rect x="878" y="110.3" width="3" height="7.4" fill="#e60000"/><rect x="884" y="112.0" width="1" height="8.7" fill="#0000d8"/><rect x="883" y="113.0" width="3" height="4.0" fill="#0000d8"/><rect x="889" y="111.0" width="1" height="11.5" fill="#0000d8"/><rect x="888" y="114.0" width="3" height="7.8" fill="#0000d8"/><rect x="894" y="120.0" width="1" height="25.0" fill="#0000d8"/><rect x="893" y="121.0" width="3" height="24.0" fill="#0000d8"/><rect x="899" y="137.0" width="1" height="8.0" fill="#e60000"/><rect x="898" y="138.0" width="3" height="7.0" fill="#e60000"/><rect x="904" y="126.0" width="1" height="12.6" fill="#e60000"/><rect x="903" y="126.0" width="3" height="12.6" fill="#e60000"/><rect x="909" y="117.0" width="1" height="11.8" fill="#e60000"/><rect x="908" y="120.0" width="3" height="6.8" fill="#e60000"/><rect x="914" y="118.4" width="1" height="7.4" fill="#e60000"/><rect x="913" y="119.2" width="3" height="1.8" fill="#e60000"/><rect x="919" y="114.0" width="1" height="6.0" fill="#e60000"/><rect x="918" y="117.0" width="3" height="3.0" fill="#e60000"/><rect x="924" y="116.0" width="1" height="5.0" fill="#0000d8"/><rect x="923" y="116.7" width="3" height="2.5" fill="#0000d8"/><rect x="929" y="117.0" width="1" height="13.0" fill="#0000d8"/><rect x="928" y="118.0" width="3" height="11.2" fill="#0000d8"/><rect x="934" y="118.4" width="1" height="12.6" fill="#e60000"/><rect x="933" y="120.0" width="3" height="8.8" fill="#e60000"/><rect x="938" y="118.4" width="1" height="6.1" fill="#0000d8"/><rect x="937" y="120.0" width="3" height="3.6" fill="#0000d8"/><rect x="943" y="118.0" width="1" height="5.0" fill="#e60000"/><rect x="942" y="118.9" width="3" height="3.5" fill="#e60000"/><rect x="948" y="118.5" width="1" height="5.4" fill="#0000d8"/><rect x="947" y="119.2" width="3" height="3.2" fill="#0000d8"/><rect x="154" y="182" width="4" height="1" fill="#e60000"/><rect x="375" y="100" width="4" height="1" fill="#0000d8"/><rect x="598" y="191" width="4" height="1" fill="#e60000"/><rect x="158" y="394" width="4" height="1" fill="#e60000"/><rect x="380" y="366" width="4" height="1" fill="#0000d8"/><rect x="601" y="396" width="4" height="1" fill="#e60000"/><rect x="824" y="374" width="4" height="1" fill="#e60000"/><rect x="32" y="380.5" width="1" height="8.1" fill="#e60000"/><rect x="31" y="383.7" width="3" height="4.9" fill="#e60000"/><rect x="62" y="378.5" width="1" height="8.5" fill="#0000d8"/><rect x="61" y="383.7" width="3" height="3.3" fill="#0000d8"/><rect x="91" y="377.0" width="1" height="8.8" fill="#e60000"/><rect x="90" y="377.7" width="3" height="8.1" fill="#e60000"/><rect x="121" y="374.9" width="1" height="8.8" fill="#0000d8"/><rect x="120" y="377.7" width="3" height="6.0" fill="#0000d8"/><rect x="150" y="381.0" width="1" height="15.5" fill="#0000d8"/><rect x="149" y="381.7" width="3" height="14.1" fill="#0000d8"/><rect x="195" y="374.0" width="1" height="26.7" fill="#e60000"/><rect x="194" y="374.9" width="3" height="25.8" fill="#e60000"/><rect x="224" y="369.7" width="1" height="6.8" fill="#e60000"/><rect x="223" y="371.6" width="3" height="4.9" fill="#e60000"/><rect x="254" y="366.8" width="1" height="6.9" fill="#e60000"/><rect x="253" y="368.8" width="3" height="4.9" fill="#e60000"/><rect x="283" y="365.6" width="1" height="6.8" fill="#0000d8"/><rect x="282" y="369.5" width="3" height="2.9" fill="#0000d8"/><rect x="313" y="366.8" width="1" height="6.4" fill="#e60000"/><rect x="312" y="368.0" width="3" height="4.4" fill="#e60000"/><rect x="342" y="362.8" width="1" height="8.0" fill="#e60000"/><rect x="341" y="362.8" width="3" height="6.7" fill="#e60000"/><rect x="372" y="361.6" width="1" height="4.8" fill="#0000d8"/><rect x="371" y="362.5" width="3" height="3.5" fill="#0000d8"/><rect x="416" y="381.0" width="1" height="23.7" fill="#0000d8"/><rect x="415" y="381.7" width="3" height="19.0" fill="#0000d8"/><rect x="445" y="393.8" width="1" height="22.2" fill="#0000d8"/><rect x="444" y="400.0" width="3" height="16.0" fill="#0000d8"/><rect x="475" y="406.0" width="1" height="20.0" fill="#0000d8"/><rect x="474" y="416.0" width="3" height="7.0" fill="#0000d8"/><rect x="505" y="409.2" width="1" height="15.8" fill="#e60000"/><rect x="504" y="410.8" width="3" height="11.2" fill="#e60000"/><rect x="535" y="397.9" width="1" height="14.1" fill="#e60000"/><rect x="534" y="399.0" width="3" height="13.0" fill="#e60000"/><rect x="565" y="395.8" width="1" height="8.1" fill="#0000d8"/><rect x="564" y="399.0" width="3" height="4.0" fill="#0000d8"/><rect x="594" y="395.8" width="1" height="7.0" fill="#e60000"/><rect x="593" y="395.8" width="3" height="6.2" fill="#e60000"/><rect x="638" y="371.6" width="1" height="22.2" fill="#e60000"/><rect x="637" y="389.8" width="3" height="4.0" fill="#e60000"/><rect x="668" y="378.9" width="1" height="12.1" fill="#e60000"/><rect x="667" y="385.8" width="3" height="5.2" fill="#e60000"/><rect x="697" y="378.9" width="1" height="9.7" fill="#0000d8"/><rect x="696" y="385.8" width="3" height="2.8" fill="#0000d8"/><rect x="727" y="385.8" width="1" height="6.0" fill="#0000d8"/><rect x="726" y="386.8" width="3" height="4.0" fill="#0000d8"/><rect x="756" y="383.7" width="1" height="7.3" fill="#e60000"/><rect x="755" y="384.7" width="3" height="6.3" fill="#e60000"/><rect x="786" y="381.0" width="1" height="9.6" fill="#e60000"/><rect x="785" y="385.3" width="3" height="1.2" fill="#e60000"/><rect x="815" y="373.7" width="1" height="12.1" fill="#e60000"/><rect x="814" y="373.7" width="3" height="12.1" fill="#e60000"/><rect x="860" y="367.6" width="1" height="9.3" fill="#0000d8"/><rect x="859" y="370.0" width="3" height="6.0" fill="#0000d8"/><rect x="889" y="367.6" width="1" height="8.1" fill="#e60000"/><rect x="888" y="373.5" width="3" height="2.2" fill="#e60000"/><rect x="919" y="370.4" width="1" height="11.3" fill="#e60000"/><rect x="918" y="370.8" width="3" height="2.9" fill="#e60000"/><rect x="948" y="371.6" width="1" height="5.3" fill="#0000d8"/><rect x="947" y="371.6" width="3" height="2.9" fill="#0000d8"/><rect x="4" y="496" width="944" height="1" fill="#008000"/><rect x="4" y="557" width="944" height="1" fill="#008000"/><rect x="4" y="643" width="944" height="1" fill="#008000"/><rect x="4" y="806.500" width="944" height="1.300" shape-rendering="auto" fill="#ff00ff"/></svg>
<svg width="1388" height="883" viewBox="0 0 1388 883"><line x1="104.6" y1="134.3" x2="172.3" y2="200.5" stroke="#0000d8" stroke-width="1" stroke-dasharray="3,3" shape-rendering="crispEdges"/><line x1="219" y1="121" x2="268" y2="99" stroke="#e60000" stroke-width="1" stroke-dasharray="3,3" shape-rendering="crispEdges"/><line x1="308" y1="104" x2="343" y2="93" stroke="#e60000" stroke-width="1" stroke-dasharray="3,3" shape-rendering="crispEdges"/><line x1="367" y1="97" x2="393" y2="150" stroke="#0000d8" stroke-width="1" stroke-dasharray="3,3" shape-rendering="crispEdges"/><line x1="515" y1="207" x2="545" y2="195" stroke="#e60000" stroke-width="1" stroke-dasharray="3,3" shape-rendering="crispEdges"/><line x1="545" y1="195" x2="601" y2="190" stroke="#e60000" stroke-width="1" stroke-dasharray="3,3" shape-rendering="crispEdges"/><line x1="655" y1="143" x2="797" y2="134" stroke="#e60000" stroke-width="1" stroke-dasharray="3,3" shape-rendering="crispEdges"/><line x1="797" y1="134" x2="823" y2="122.5" stroke="#e60000" stroke-width="1" stroke-dasharray="3,3" shape-rendering="crispEdges"/><line x1="866" y1="113" x2="880" y2="112" stroke="#e60000" stroke-width="1" stroke-dasharray="3,3" shape-rendering="crispEdges"/><polyline fill="none" stroke="#ff0000" stroke-width="3" stroke-linejoin="round" shape-rendering="crispEdges" points="4,513.7 33,513.7 60.5,522.6 92,522.6 150,538.7 160.5,529.9 224,513.7 373,513.7 382.4,522.6 417.5,522.6 445.7,530.7 506.3,530.7 534.5,522.6 697.3,522.6 726.4,530.7 757.8,530.7 816.3,513.7 825.2,506.5 861.5,506.5 889,498.4 919.2,498.4 949.4,506.5"/><polyline fill="none" stroke="#0000ff" stroke-width="3.4" stroke-linejoin="round" shape-rendering="crispEdges" points="3.9,735.9 7.3,734.8 11.7,716.3 17.7,670.6 22.1,670.6 26.6,711.9 31.8,714.1 37.2,757.7 41.7,714.1 47.4,670.6 52,670.6 62,711.9 67.2,757.7 71.6,714.1 76.8,670.6 81.5,670.6 91.1,711.9 96.4,757.7 101,714.1 106.8,670.6 111.5,670.6 115.9,711.9 121,735.9 126.3,779.5 131,735.9 136.7,692.3 140.6,692.3 145.3,733.7 156.2,757.7 170,801.2 175,735.9 181,692.3 185.4,692.3 190,735.9 195.3,757.7 200,779.5 204.4,714.1 209.6,670.6 214.3,670.6 220,714.1 229,757.7 234.4,703.2 239.6,648.8 244.7,648.8 250,692.3 258.8,735.9 263.4,692.3 269.2,627.0 273.3,627.0 278.5,692.3 288.2,735.9 293.4,670.6 299.4,648.8 303.8,648.8 308.2,692.3 313.7,714.1 318.1,757.7 322.8,670.6 328.5,648.8 333.2,648.8 342.9,692.3 347.3,735.9 352,670.6 357.7,648.8 362.4,648.8 367.6,692.3 378,714.1 392.3,757.7 397.6,692.3 402.8,670.6 407.2,670.6 411.9,711.9 417,735.9 421.5,779.5 426.2,714.1 432,692.3 437.1,692.3 447,735.9 451,779.5 455.6,714.1 461.4,692.3 467,692.3 475.7,735.9 480.1,779.5 484.8,714.1 495.6,670.6 500.8,714.1 510,757.7 515.2,714.1 525.6,670.6 530,713.0 534.7,714.1 539.4,735.9 543.8,692.3 549.5,670.6 559.4,714.1 564.6,735.9 569,735.9 575,714.1 579.5,670.6 584.2,692.3 589.4,692.3 599.8,714.1 613.3,714.1 618,692.3 623.7,648.8 628.4,670.6 633.6,670.6 643.5,714.1 648.7,714.1 653.7,670.6 658.4,692.3 668.8,692.3 673.2,714.1 678,714.1 682.6,692.3 687.6,714.1 697.4,714.1 702.7,735.9 707.3,735.9 712.5,714.1 717.5,735.9 731.7,735.9 736.4,757.7 741.4,735.9 746,734.8 751.3,714.1 761.7,714.1 766.4,735.9 771.3,714.1 776.5,735.9 781.7,714.1 787.2,711.9 791.6,692.3 796.3,735.9 801.3,714.1 806,735.9 811.1,714.1 821,714.1 835.9,692.3 840.3,735.9 845,714.1 850.2,735.9 855.4,714.1 860.6,713.0 865,670.6 869.7,735.9 874.4,692.3 879.4,714.1 884.6,692.3 889.8,691.3 894.5,670.6 899.7,735.9 904.4,692.3 909.6,714.1 924.4,648.8 929.6,714.1 934.3,670.6 938.8,714.1 949.2,670.6"/><path d="M96.5,141.6 l5,5.5 h-3.2 v6.5 h-3.6 v-6.5 h-3.2 z" fill="#e60000"/><path d="M106.5,141.6 l5,5.5 h-3.2 v6.5 h-3.6 v-6.5 h-3.2 z" fill="#e60000"/><path d="M219.5,121.8 l5,5.5 h-3.2 v6.5 h-3.6 v-6.5 h-3.2 z" fill="#e60000"/><path d="M239.5,118 l5,5.5 h-3.2 v6.5 h-3.6 v-6.5 h-3.2 z" fill="#e60000"/><path d="M249.5,109 l5,5.5 h-3.2 v6.5 h-3.6 v-6.5 h-3.2 z" fill="#e60000"/><path d="M288.5,116.7 l5,5.5 h-3.2 v6.5 h-3.6 v-6.5 h-3.2 z" fill="#e60000"/><path d="M308.5,113.3 l5,5.5 h-3.2 v6.5 h-3.6 v-6.5 h-3.2 z" fill="#e60000"/><path d="M343.5,99.7 l5,5.5 h-3.2 v6.5 h-3.6 v-6.5 h-3.2 z" fill="#e60000"/><path d="M367.5,100.6 l5,5.5 h-3.2 v6.5 h-3.6 v-6.5 h-3.2 z" fill="#e60000"/><path d="M510.5,208.9 l5,5.5 h-3.2 v6.5 h-3.6 v-6.5 h-3.2 z" fill="#e60000"/><path d="M515.5,215 l5,5.5 h-3.2 v6.5 h-3.6 v-6.5 h-3.2 z" fill="#e60000"/><path d="M520.5,218 l5,5.5 h-3.2 v6.5 h-3.6 v-6.5 h-3.2 z" fill="#e60000"/><path d="M530.5,214 l5,5.5 h-3.2 v6.5 h-3.6 v-6.5 h-3.2 z" fill="#e60000"/><path d="M544.5,213.6 l5,5.5 h-3.2 v6.5 h-3.6 v-6.5 h-3.2 z" fill="#e60000"/><path d="M658.5,154.5 l5,5.5 h-3.2 v6.5 h-3.6 v-6.5 h-3.2 z" fill="#e60000"/><path d="M801.5,136.9 l5,5.5 h-3.2 v6.5 h-3.6 v-6.5 h-3.2 z" fill="#e60000"/><path d="M810.5,131 l5,5.5 h-3.2 v6.5 h-3.6 v-6.5 h-3.2 z" fill="#e60000"/><path d="M860.5,133 l5,5.5 h-3.2 v6.5 h-3.6 v-6.5 h-3.2 z" fill="#e60000"/><path d="M869.5,119 l5,5.5 h-3.2 v6.5 h-3.6 v-6.5 h-3.2 z" fill="#e60000"/><path d="M880.5,123.6 l5,5.5 h-3.2 v6.5 h-3.6 v-6.5 h-3.2 z" fill="#e60000"/><path d="M97.5,113.6 h8 v2 h-2.3 v3.5 h3.3 l-5,5.5 l-5,-5.5 h3.3 v-3.5 h-2.3 z" fill="#0000d8"/><path d="M230.5,126 h8 v2 h-2.3 v3.5 h3.3 l-5,5.5 l-5,-5.5 h3.3 v-3.5 h-2.3 z" fill="#0000d8"/><path d="M240.5,115 h8 v2 h-2.3 v3.5 h3.3 l-5,5.5 l-5,-5.5 h3.3 v-3.5 h-2.3 z" fill="#0000d8"/><path d="M260.5,112.5 h8 v2 h-2.3 v3.5 h3.3 l-5,5.5 l-5,-5.5 h3.3 v-3.5 h-2.3 z" fill="#0000d8"/><path d="M299.5,124 h8 v2 h-2.3 v3.5 h3.3 l-5,5.5 l-5,-5.5 h3.3 v-3.5 h-2.3 z" fill="#0000d8"/><path d="M329.5,117.6 h8 v2 h-2.3 v3.5 h3.3 l-5,5.5 l-5,-5.5 h3.3 v-3.5 h-2.3 z" fill="#0000d8"/><path d="M358.5,97.2 h8 v2 h-2.3 v3.5 h3.3 l-5,5.5 l-5,-5.5 h3.3 v-3.5 h-2.3 z" fill="#0000d8"/><path d="M511.5,191.5 h8 v2 h-2.3 v3.5 h3.3 l-5,5.5 l-5,-5.5 h3.3 v-3.5 h-2.3 z" fill="#0000d8"/><path d="M521.5,188.5 h8 v2 h-2.3 v3.5 h3.3 l-5,5.5 l-5,-5.5 h3.3 v-3.5 h-2.3 z" fill="#0000d8"/><path d="M531.5,188.5 h8 v2 h-2.3 v3.5 h3.3 l-5,5.5 l-5,-5.5 h3.3 v-3.5 h-2.3 z" fill="#0000d8"/><path d="M585.5,177.3 h8 v2 h-2.3 v3.5 h3.3 l-5,5.5 l-5,-5.5 h3.3 v-3.5 h-2.3 z" fill="#0000d8"/><path d="M792.5,117.7 h8 v2 h-2.3 v3.5 h3.3 l-5,5.5 l-5,-5.5 h3.3 v-3.5 h-2.3 z" fill="#0000d8"/><path d="M801.5,113 h8 v2 h-2.3 v3.5 h3.3 l-5,5.5 l-5,-5.5 h3.3 v-3.5 h-2.3 z" fill="#0000d8"/><path d="M816.5,109.2 h8 v2 h-2.3 v3.5 h3.3 l-5,5.5 l-5,-5.5 h3.3 v-3.5 h-2.3 z" fill="#0000d8"/><path d="M862.5,130 h8 v2 h-2.3 v3.5 h3.3 l-5,5.5 l-5,-5.5 h3.3 v-3.5 h-2.3 z" fill="#0000d8"/><path d="M870.5,130 h8 v2 h-2.3 v3.5 h3.3 l-5,5.5 l-5,-5.5 h3.3 v-3.5 h-2.3 z" fill="#0000d8"/><circle cx="170.5" cy="152" r="6.7" fill="#e60000"/><path d="M169.0,158 h3 v7 h3.2 l-4.7,5 l-4.7,-5 h3.2 z" fill="#e60000"/><text x="170.5" y="156" text-anchor="middle" font-family="Liberation Sans,sans-serif" font-weight="bold" font-style="italic" font-size="11" fill="#fff">S</text><circle cx="392.5" cy="124.3" r="6.7" fill="#e60000"/><path d="M391.0,130.3 h3 v7 h3.2 l-4.7,5 l-4.7,-5 h3.2 z" fill="#e60000"/><text x="392.5" y="128.3" text-anchor="middle" font-family="Liberation Sans,sans-serif" font-weight="bold" font-style="italic" font-size="11" fill="#fff">S</text></svg>
<div class="t" style="left:101px;transform:translateX(-50%);top:97.5px;font-size:14.5px;color:#000;letter-spacing:1.3px;">매수1청산</div>
<div class="t" style="left:234px;transform:translateX(-50%);top:139.2px;font-size:14.5px;color:#000;letter-spacing:1.3px;">매수1청산</div>
<div class="t" style="left:244.2px;transform:translateX(-50%);top:128.2px;font-size:14.5px;color:#000;letter-spacing:1.3px;">매수1청산</div>
<div class="t" style="left:264.6px;transform:translateX(-50%);top:125.7px;font-size:14.5px;color:#000;letter-spacing:1.3px;">매수1청산</div>
<div class="t" style="left:302px;transform:translateX(-50%);top:137.6px;font-size:14.5px;color:#000;letter-spacing:1.3px;">매수1청산</div>
<div class="t" style="left:333.5px;transform:translateX(-50%);top:130.8px;font-size:14.5px;color:#000;letter-spacing:1.3px;">매수1청산</div>
<div class="t" style="left:361.5px;transform:translateX(-50%);top:112.0px;font-size:14.5px;color:#000;letter-spacing:1.3px;">매수1청산</div>
<div class="t" style="left:515px;transform:translateX(-50%);top:175.2px;font-size:14.5px;color:#000;letter-spacing:1.3px;">매수1청산</div>
<div class="t" style="left:525px;transform:translateX(-50%);top:172.1px;font-size:14.5px;color:#000;letter-spacing:1.3px;">매수1청산</div>
<div class="t" style="left:535.3px;transform:translateX(-50%);top:171.1px;font-size:14.5px;color:#000;letter-spacing:1.3px;">매수1청산</div>
<div class="t" style="left:588px;transform:translateX(-50%);top:161.8px;font-size:14.5px;color:#000;letter-spacing:1.3px;">매수1청산</div>
<div class="t" style="left:796px;transform:translateX(-50%);top:100.8px;font-size:14.5px;color:#000;letter-spacing:1.3px;">매수1청산</div>
<div class="t" style="left:805.5px;transform:translateX(-50%);top:97.2px;font-size:14.5px;color:#000;letter-spacing:1.3px;">매수1청산</div>
<div class="t" style="left:819.8px;transform:translateX(-50%);top:95.0px;font-size:14.5px;color:#000;letter-spacing:1.3px;">매수1청산</div>
<div class="t" style="left:865px;transform:translateX(-50%);top:145.1px;font-size:14.5px;color:#000;letter-spacing:1.3px;">매수1청산</div>
<div class="t" style="left:874px;transform:translateX(-50%);top:145.1px;font-size:14.5px;color:#000;letter-spacing:1.3px;">매수1청산</div>
<div class="t" style="left:101px;transform:translateX(-50%);top:82.2px;font-size:14.5px;color:#000;">0</div>
<div class="t" style="left:96.3px;transform:translateX(-50%);top:157.9px;font-size:14.5px;color:#000;">a</div>
<div class="t" style="left:106px;transform:translateX(-50%);top:157.9px;font-size:14.5px;color:#000;">a</div>
<div class="t" style="left:96.3px;transform:translateX(-50%);top:173.6px;font-size:14.5px;color:#000;">1</div>
<div class="t" style="left:106px;transform:translateX(-50%);top:173.6px;font-size:14.5px;color:#000;">1</div>
<div class="t" style="left:170.3px;transform:translateX(-50%);top:129.9px;font-size:14.5px;color:#000;">0</div>
<div class="t" style="left:234px;transform:translateX(-50%);top:156.4px;font-size:14.5px;color:#000;">0</div>
<div class="t" style="left:244.5px;transform:translateX(-50%);top:146.2px;font-size:14.5px;color:#000;">0</div>
<div class="t" style="left:263.6px;transform:translateX(-50%);top:143.2px;font-size:14.5px;color:#000;">0</div>
<div class="t" style="left:303.4px;transform:translateX(-50%);top:153.6px;font-size:14.5px;color:#000;">0</div>
<div class="t" style="left:332.8px;transform:translateX(-50%);top:147.7px;font-size:14.5px;color:#000;">0</div>
<div class="t" style="left:365px;transform:translateX(-50%);top:129.8px;font-size:14.5px;color:#000;">0</div>
<div class="t" style="left:391.8px;transform:translateX(-50%);top:102.0px;font-size:14.5px;color:#000;">0</div>
<div class="t" style="left:218.6px;transform:translateX(-50%);top:157.9px;font-size:14.5px;color:#000;">1</div>
<div class="t" style="left:288px;transform:translateX(-50%);top:147.7px;font-size:14.5px;color:#000;">1</div>
<div class="t" style="left:309px;transform:translateX(-50%);top:144.3px;font-size:14.5px;color:#000;">1</div>
<div class="t" style="left:219px;transform:translateX(-50%);top:142.8px;font-size:14.5px;color:#000;">a</div>
<div class="t" style="left:249.5px;transform:translateX(-50%);top:131.8px;font-size:14.5px;color:#000;">a</div>
<div class="t" style="left:288.6px;transform:translateX(-50%);top:133.8px;font-size:14.5px;color:#000;">a</div>
<div class="t" style="left:343px;transform:translateX(-50%);top:117.8px;font-size:14.5px;color:#000;">a</div>
<div class="t" style="left:367.6px;transform:translateX(-50%);top:118.8px;font-size:14.5px;color:#000;">a</div>
<div class="t" style="left:515.6px;transform:translateX(-50%);top:159.8px;font-size:14.5px;color:#000;">0</div>
<div class="t" style="left:525.8px;transform:translateX(-50%);top:156.8px;font-size:14.5px;color:#000;">0</div>
<div class="t" style="left:535.4px;transform:translateX(-50%);top:156.8px;font-size:14.5px;color:#000;">0</div>
<div class="t" style="left:510px;transform:translateX(-50%);top:193.4px;font-size:14.5px;color:#000;">a</div>
<div class="t" style="left:520.3px;transform:translateX(-50%);top:233.2px;font-size:14.5px;color:#000;">a</div>
<div class="t" style="left:530.5px;transform:translateX(-50%);top:230.2px;font-size:14.5px;color:#000;">a</div>
<div class="t" style="left:544px;transform:translateX(-50%);top:228.8px;font-size:14.5px;color:#000;">a</div>
<div class="t" style="left:520.3px;transform:translateX(-50%);top:249.1px;font-size:14.5px;color:#000;">1</div>
<div class="t" style="left:530.5px;transform:translateX(-50%);top:245.4px;font-size:14.5px;color:#000;">1</div>
<div class="t" style="left:544px;transform:translateX(-50%);top:244.4px;font-size:14.5px;color:#000;">1</div>
<div class="t" style="left:589.4px;transform:translateX(-50%);top:146.6px;font-size:14.5px;color:#000;">0</div>
<div class="t" style="left:658.4px;transform:translateX(-50%);top:169.3px;font-size:14.5px;color:#000;">a</div>
<div class="t" style="left:658.4px;transform:translateX(-50%);top:185.2px;font-size:14.5px;color:#000;">1</div>
<div class="t" style="left:796px;transform:translateX(-50%);top:84.8px;font-size:14.5px;color:#000;">0</div>
<div class="t" style="left:805.7px;transform:translateX(-50%);top:81.8px;font-size:14.5px;color:#000;">0</div>
<div class="t" style="left:820.4px;transform:translateX(-50%);top:78.0px;font-size:14.5px;color:#000;">0</div>
<div class="t" style="left:801.2px;transform:translateX(-50%);top:152.4px;font-size:14.5px;color:#000;">a</div>
<div class="t" style="left:810.5px;transform:translateX(-50%);top:146.6px;font-size:14.5px;color:#000;">a</div>
<div class="t" style="left:801.2px;transform:translateX(-50%);top:167.8px;font-size:14.5px;color:#000;">1</div>
<div class="t" style="left:810.5px;transform:translateX(-50%);top:162.1px;font-size:14.5px;color:#000;">1</div>
<div class="t" style="left:869px;transform:translateX(-50%);top:134.8px;font-size:14.5px;color:#000;">a</div>
<div class="t" style="left:860px;transform:translateX(-50%);top:148.8px;font-size:14.5px;color:#000;">a</div>
<div class="t" style="left:879px;transform:translateX(-50%);top:136.8px;font-size:14.5px;color:#000;">a</div>
<div class="t" style="left:860px;transform:translateX(-50%);top:161.8px;font-size:14.5px;color:#000;">1</div>
<div class="t" style="left:869px;transform:translateX(-50%);top:161.8px;font-size:14.5px;color:#000;">0</div>
<div class="t" style="left:877px;transform:translateX(-50%);top:161.8px;font-size:14.5px;color:#000;">0</div>
<div class="t" style="left:869px;transform:translateX(-50%);top:151.8px;font-size:14.5px;color:#000;">1</div>
<div class="t" style="left:880px;transform:translateX(-50%);top:154.8px;font-size:14.5px;color:#000;">1</div>
<div class="a" style="left:1086px;top:43px;width:25px;height:25px;background:#a5c0da;border:1px solid #fff;border-right-color:#7c8a99;border-bottom-color:#7c8a99;box-shadow:0 0 0 0 #000"></div>
<div class="a" style="left:1086px;top:68px;width:25px;height:25px;background:#e9eff6;border:1px solid #7c8a99;border-right-color:#fff;border-bottom-color:#fff"></div>
<div class="a" style="left:1089px;top:21px;width:18px;height:18px;border:1px solid #7e7e7e;background:#ececec;box-shadow:inset 1px 1px 0 #fff"><svg width="18" height="18" viewBox="0 0 18 18" style="left:-1px;top:-1px"><path d="M1,17 L17,1 V17Z" fill="#b4b4b4"/><path d="M9,4 Q5,3.5 5.5,7" fill="none" stroke="#0000d0" stroke-width="1.8"/><path d="M2.5,7 h6 l-3,3.5z" fill="#0000d0"/><path d="M9,14.5 Q13,15 12.8,11" fill="none" stroke="#0000d0" stroke-width="1.8"/><path d="M9.8,11.5 h6 l-3,-3.5z" fill="#0000d0"/></svg></div>
<div class="a" style="left:1089px;top:46px;width:18px;height:18px;border:1px solid #7e7e7e;background:#ececec;box-shadow:inset 1px 1px 0 #fff"><svg width="18" height="18" viewBox="0 0 18 18" style="left:-1px;top:-1px"><rect x="2.500" y="2.500" width="3" height="13" rx="1.5" fill="#fff" stroke="#0000d0"/><rect x="12.500" y="2.500" width="3" height="13" rx="1.500" fill="#fff" stroke="#0000d0"/><path d="M2.500,6.5h3M2.500,11.5h3M12.500,6.5h3M12.500,11.5h3" stroke="#0000d0"/><g fill="#e60000"><rect x="3.5" y="4" width="1" height="1.500"/><rect x="3.5" y="8" width="1" height="2.500"/><rect x="3.5" y="13" width="1" height="1.500"/><rect x="13.500" y="4" width="1" height="1.500"/><rect x="13.500" y="8" width="1" height="2.500"/><rect x="13.500" y="13" width="1" height="1.500"/><path d="M6.500,6.5 l2,-1.800 v1.200 h1 v-1.200 l2,1.800 l-2,1.800 v-1.200 h-1 v1.200z"/><path d="M6.500,11.500 l2,-1.800 v1.200 h1 v-1.200 l2,1.800 l-2,1.800 v-1.200 h-1 v1.200z"/></g></svg></div>
<div class="a" style="left:1089px;top:71px;width:18px;height:18px;border:1px solid #555;background:#ececec;box-shadow:inset 1px 1px 0 #fff"><svg width="18" height="18" viewBox="0 0 18 18" style="left:-1px;top:-1px"><path d="M5,2.500 V14 L7.800,11.500 L9.800,15.500 L12,14.500 L10,10.800 H13.500 Z" fill="#0000d0"/></svg></div>
<div class="a" style="left:1089px;top:96px;width:18px;height:18px;border:1px solid #9a9a9a;background:#a9c2dc;box-shadow:inset 1px 1px 0 #fff"><svg width="18" height="18" viewBox="0 0 18 18" style="left:-1px;top:-1px"><g fill="none" stroke="#f4f4f4" stroke-width="1.2"><path d="M3,15L15,3"/><rect x="3" y="3" width="3" height="3"/><rect x="12" y="12" width="3" height="3"/></g><g fill="none" stroke="#9a9a9a" stroke-width="1.2"><path d="M4,14L14,4M4,4H9V7H5M10,10H14V13H11V15"/></g></svg></div>
<div class="a" style="left:1089px;top:121px;width:18px;height:18px;border:1px solid #9a9a9a;background:#a9c2dc;box-shadow:inset 1px 1px 0 #fff"><svg width="18" height="18" viewBox="0 0 18 18" style="left:-1px;top:-1px"><g fill="none" stroke="#9a9a9a" stroke-width="1.2"><path d="M3,3L8,8M5,11l6,-4l4,2l-6,4zM5,11v3l4,2v-3"/><circle cx="10.500" cy="8.500" r="4.500"/></g><path d="M6,12l5,-3" stroke="#f4f4f4"/></svg></div>
<div class="a" style="left:1089px;top:146px;width:18px;height:18px;border:1px solid #9a9a9a;background:#a9c2dc;box-shadow:inset 1px 1px 0 #fff"><svg width="18" height="18" viewBox="0 0 18 18" style="left:-1px;top:-1px"><g fill="none" stroke="#9a9a9a" stroke-width="1.2"><path d="M3,3h4M3,5h4M9,3v4M11,3v4M5,11l6,-4l4,2l-6,4zM5,11v3l4,2v-3"/></g><path d="M6,12l5,-3" stroke="#f4f4f4"/></svg></div>
<div class="a" style="left:1089px;top:171px;width:18px;height:18px;border:1px solid #7e7e7e;background:#ececec;box-shadow:inset 1px 1px 0 #fff"><svg width="18" height="18" viewBox="0 0 18 18" style="left:-1px;top:-1px"><path d="M2.500,2V15.500H15" fill="none" stroke="#0000d0" stroke-width="1.2"/><path d="M4,7.500L6.500,5L8,7M9.500,11L11.500,13L15.500,8.500" fill="none" stroke="#000" stroke-width="1.100"/><path d="M8.500,2V13.500" stroke="#e60000" stroke-width="1.300"/></svg></div>
<div class="a" style="left:1089px;top:196px;width:18px;height:18px;border:1px solid #7e7e7e;background:#ececec;box-shadow:inset 1px 1px 0 #fff"><svg width="18" height="18" viewBox="0 0 18 18" style="left:-1px;top:-1px"><path d="M4,8.500H14" stroke="#0000d0" stroke-width="1.300"/><rect x="2.500" y="7" width="3" height="3" fill="#e60000"/><rect x="12" y="7" width="3" height="3" fill="#e60000"/></svg></div>
<div class="a" style="left:1089px;top:221px;width:18px;height:18px;border:1px solid #7e7e7e;background:#ececec;box-shadow:inset 1px 1px 0 #fff"><svg width="18" height="18" viewBox="0 0 18 18" style="left:-1px;top:-1px"><path d="M9,4V14" stroke="#0000d0" stroke-width="1.300"/><rect x="7.500" y="2.500" width="3" height="3" fill="#e60000"/><rect x="7.500" y="12" width="3" height="3" fill="#e60000"/></svg></div>
<div class="a" style="left:1089px;top:246px;width:18px;height:18px;border:1px solid #7e7e7e;background:#ececec;box-shadow:inset 1px 1px 0 #fff"><svg width="18" height="18" viewBox="0 0 18 18" style="left:-1px;top:-1px"><path d="M4.500,11V15.500H12.500V10" fill="none" stroke="#0000d0" stroke-width="1.300"/><rect x="3.500" y="7.500" width="3" height="4" fill="#0000d0"/><path d="M5,5V8" stroke="#0000d0"/><rect x="11" y="3" width="3" height="3.500" fill="#e60000"/><path d="M12.500,1.500V9" stroke="#e60000"/></svg></div>
<div class="a" style="left:1089px;top:271px;width:18px;height:18px;border:1px solid #7e7e7e;background:#ececec;box-shadow:inset 1px 1px 0 #fff"><svg width="18" height="18" viewBox="0 0 18 18" style="left:-1px;top:-1px"><path d="M4,14L14,4" stroke="#0000d0" stroke-width="1.300"/><rect x="2.500" y="12.500" width="3" height="3" fill="#e60000"/><rect x="12.500" y="2.500" width="3" height="3" fill="#e60000"/></svg></div>
<div class="a" style="left:1089px;top:296px;width:18px;height:18px;border:1px solid #7e7e7e;background:#ececec;box-shadow:inset 1px 1px 0 #fff"><svg width="18" height="18" viewBox="0 0 18 18" style="left:-1px;top:-1px"><path d="M2.500,16L15.500,2" stroke="#0000d0" stroke-width="1.200"/><text x="2" y="9" font-family="Liberation Sans,sans-serif" font-size="9" font-weight="bold" fill="#e60000">A</text><text x="9.5" y="16" font-family="Liberation Sans,sans-serif" font-size="9" font-weight="bold" fill="#e60000">T</text></svg></div>
<div class="a" style="left:1089px;top:321px;width:18px;height:18px;border:1px solid #7e7e7e;background:#ececec;box-shadow:inset 1px 1px 0 #fff"><svg width="18" height="18" viewBox="0 0 18 18" style="left:-1px;top:-1px"><g stroke="#e60000" stroke-width="1.300"><path d="M3,3.500H15M5,6H15M7,8.500H15"/></g><g stroke="#0000d0" stroke-width="1.300"><path d="M6,10.500H15M4,12.500H15M2.500,14.700H15"/></g></svg></div>
<div class="a" style="left:1089px;top:346px;width:18px;height:18px;border:1px solid #7e7e7e;background:#ececec;box-shadow:inset 1px 1px 0 #fff"><svg width="18" height="18" viewBox="0 0 18 18" style="left:-1px;top:-1px"><text x="3" y="9" font-family="Liberation Sans,sans-serif" font-size="8.5" font-weight="bold" fill="#e60000">f/L</text><g stroke="#0000d0" stroke-width="1.400"><path d="M4.500,10.500V15.500M8,10.500V15.500M11,10.500V15.500M14.500,10.500V15.500"/></g></svg></div>
<div class="a" style="left:1089px;top:371px;width:18px;height:18px;border:1px solid #7e7e7e;background:#ececec;box-shadow:inset 1px 1px 0 #fff"><svg width="18" height="18" viewBox="0 0 18 18" style="left:-1px;top:-1px"><text x="3" y="9" font-family="Liberation Sans,sans-serif" font-size="9" font-weight="bold" fill="#e60000">f/f</text><path d="M3,13.500H9M3,15.500H8M8,15.500Q12,10 15,12.500Q13,15 9,13M8,13Q12,17 15.500,14.500" fill="none" stroke="#0000d0" stroke-width="1.200"/></svg></div>
<div class="a" style="left:1089px;top:396px;width:18px;height:18px;border:1px solid #7e7e7e;background:#ececec;box-shadow:inset 1px 1px 0 #fff"><svg width="18" height="18" viewBox="0 0 18 18" style="left:-1px;top:-1px"><text x="4" y="8" font-family="Liberation Sans,sans-serif" font-size="9" font-weight="bold" fill="#e60000">f</text><circle cx="13" cy="6.500" r="2" fill="none" stroke="#e60000" stroke-width="1.200"/><path d="M11.500,2L8,9" stroke="#e60000" stroke-width="1.200"/><path d="M2.500,15.500Q8,12 9,7Q10,12 15.500,15.500M4.500,15.500Q8,13 9,10Q10,13 13.500,15.500" fill="none" stroke="#0000d0" stroke-width="1.300"/></svg></div>
<div class="a" style="left:1089px;top:421px;width:18px;height:18px;border:1px solid #7e7e7e;background:#ececec;box-shadow:inset 1px 1px 0 #fff"><svg width="18" height="18" viewBox="0 0 18 18" style="left:-1px;top:-1px"><text x="2.5" y="9" font-family="Liberation Sans,sans-serif" font-size="8.5" font-weight="bold" fill="#e60000">f/R</text><g stroke="#0000d0" stroke-width="1.300"><path d="M3,11H15M3,15.500H15"/><path d="M3,13.300H15" stroke-dasharray="3,1"/></g></svg></div>
<div class="a" style="left:1089px;top:446px;width:18px;height:18px;border:1px solid #7e7e7e;background:#ececec;box-shadow:inset 1px 1px 0 #fff"><svg width="18" height="18" viewBox="0 0 18 18" style="left:-1px;top:-1px"><path d="M3,10L12,2.500M3,10L9,15.500M7,13.500L15.500,6" fill="none" stroke="#0000d0" stroke-width="1.200"/></svg></div>
<div class="a" style="left:1089px;top:471px;width:18px;height:18px;border:1px solid #7e7e7e;background:#ececec;box-shadow:inset 1px 1px 0 #fff"><svg width="18" height="18" viewBox="0 0 18 18" style="left:-1px;top:-1px"><text x="2.5" y="8" font-family="Liberation Sans,sans-serif" font-size="8" font-weight="bold" fill="#e60000">E</text><path d="M3,14L8,9L11,12L15.500,7.500" fill="none" stroke="#0000d0" stroke-width="1.300"/><rect x="1.800" y="13" width="2.400" height="2.400" fill="#e60000"/><rect x="6.800" y="7.800" width="2.400" height="2.400" fill="#e60000"/></svg></div>
<div class="a" style="left:1089px;top:496px;width:18px;height:18px;border:1px solid #7e7e7e;background:#ececec;box-shadow:inset 1px 1px 0 #fff"><svg width="18" height="18" viewBox="0 0 18 18" style="left:-1px;top:-1px"><text x="2.5" y="8" font-family="Liberation Sans,sans-serif" font-size="8" font-weight="bold" fill="#e60000">E</text><path d="M3,14L8,9L11,12L15.500,7.500" fill="none" stroke="#0000d0" stroke-width="1.300"/><rect x="1.800" y="13" width="2.400" height="2.400" fill="#e60000"/><rect x="6.800" y="7.800" width="2.400" height="2.400" fill="#e60000"/><rect x="9.800" y="10.800" width="2.400" height="2.400" fill="#e60000"/></svg></div>
<div class="a" style="left:1089px;top:521px;width:18px;height:18px;border:1px solid #7e7e7e;background:#ececec;box-shadow:inset 1px 1px 0 #fff"><svg width="18" height="18" viewBox="0 0 18 18" style="left:-1px;top:-1px"><path d="M4,14.500H14" stroke="#b8b8b8" stroke-width="1"/><path d="M5,12L12,4.500L14.500,6.500L7.500,14Z" fill="#2e8f78" stroke="#1d6b58" stroke-width="0.600"/><path d="M5,12L7.500,14L4,15Z" fill="#e8c87a"/><path d="M4,15l1,-1.200" stroke="#444" stroke-width="1"/></svg></div>
<div class="a" style="left:1089px;top:546px;width:18px;height:18px;border:1px solid #7e7e7e;background:#ececec;box-shadow:inset 1px 1px 0 #fff"><svg width="18" height="18" viewBox="0 0 18 18" style="left:-1px;top:-1px"><text x="2.5" y="8.5" font-family="Liberation Sans,sans-serif" font-size="8.5" font-weight="bold" fill="#e60000">L</text><g stroke="#e60000" stroke-width="1.400"><path d="M5.500,11V16M9.500,8V13.500M13.500,3.500V10"/></g><path d="M3.500,15.500L15,4.500" stroke="#0000d0" stroke-width="1.300"/></svg></div>
<div class="a" style="left:1089px;top:571px;width:18px;height:18px;border:1px solid #7e7e7e;background:#ececec;box-shadow:inset 1px 1px 0 #fff"><svg width="18" height="18" viewBox="0 0 18 18" style="left:-1px;top:-1px"><text x="2.5" y="8.5" font-family="Liberation Sans,sans-serif" font-size="8" font-weight="bold" fill="#e60000">D</text><g stroke="#e60000" stroke-width="1.400"><path d="M5.500,10.500V16M9.500,6V15M13.500,3V12"/></g><path d="M2.500,14L15,3.500M5,16L15.500,7" stroke="#0000d0" stroke-width="1.200"/></svg></div>
<div class="a" style="left:1089px;top:596px;width:18px;height:18px;border:1px solid #7e7e7e;background:#ececec;box-shadow:inset 1px 1px 0 #fff"><svg width="18" height="18" viewBox="0 0 18 18" style="left:-1px;top:-1px"><text x="2.5" y="8" font-family="Liberation Sans,sans-serif" font-size="8" font-weight="bold" fill="#e60000">E</text><g stroke="#e60000" stroke-width="1.400"><path d="M6,11V16M10,6V15M14,3V11"/></g><path d="M2.500,14L15,3.500M5,16L15.500,7" stroke="#0000d0" stroke-width="1.200"/></svg></div>
<div class="a" style="left:1089px;top:621px;width:18px;height:18px;border:1px solid #7e7e7e;background:#ececec;box-shadow:inset 1px 1px 0 #fff"><svg width="18" height="18" viewBox="0 0 18 18" style="left:-1px;top:-1px"><text x="2.5" y="8" font-family="Liberation Sans,sans-serif" font-size="7.5" font-weight="bold" fill="#e60000">R</text><g stroke="#e60000" stroke-width="1.400"><path d="M3.500,12V16M8,7V15M11.500,4V13M15,3V10"/></g><path d="M2.500,13.500L15,3M4,16L15.500,6.500" stroke="#0000d0" stroke-width="1.200"/></svg></div>
<div class="a" style="left:1089px;top:646px;width:18px;height:18px;border:1px solid #7e7e7e;background:#ececec;box-shadow:inset 1px 1px 0 #fff"><svg width="18" height="18" viewBox="0 0 18 18" style="left:-1px;top:-1px"><path d="M3,3.500H15M3,15H15" stroke="#0000d0" stroke-width="1.400"/><text x="2.5" y="12.5" font-family="Liberation Sans,sans-serif" font-size="9" font-weight="bold" fill="#e60000">Q</text><path d="M10,8H15" stroke="#e60000" stroke-width="1.200"/><path d="M10,11H15" stroke="#0000d0" stroke-width="1.200" stroke-dasharray="2,1"/></svg></div>
<div class="a" style="left:1089px;top:671px;width:18px;height:18px;border:1px solid #7e7e7e;background:#ececec;box-shadow:inset 1px 1px 0 #fff"><svg width="18" height="18" viewBox="0 0 18 18" style="left:-1px;top:-1px"><text x="9" y="15" text-anchor="middle" font-family="Liberation Serif,serif" font-size="17" font-weight="bold" fill="#2020c8">T</text></svg></div>
<div class="a" style="left:1089px;top:696px;width:18px;height:18px;border:1px solid #7e7e7e;background:#ececec;box-shadow:inset 1px 1px 0 #fff"><svg width="18" height="18" viewBox="0 0 18 18" style="left:-1px;top:-1px"><path d="M9,2.500L15,8.500H11.500V15.500H6.500V8.500H3Z" fill="#2020d0"/></svg></div>
<div class="a" style="left:1089px;top:721px;width:18px;height:18px;border:1px solid #7e7e7e;background:#ececec;box-shadow:inset 1px 1px 0 #fff"><svg width="18" height="18" viewBox="0 0 18 18" style="left:-1px;top:-1px"><path d="M9,15.500L15,9.500H11.500V2.500H6.500V9.500H3Z" fill="#2020d0"/></svg></div>
<div class="a" style="left:1089px;top:746px;width:18px;height:18px;border:1px solid #7e7e7e;background:#ececec;box-shadow:inset 1px 1px 0 #fff"><svg width="18" height="18" viewBox="0 0 18 18" style="left:-1px;top:-1px"><rect x="3.500" y="3.500" width="11" height="11" fill="#fff" stroke="#2020d0" stroke-width="1.200"/><rect x="5.500" y="5.500" width="7" height="7" fill="#f06060"/></svg></div>
<div class="a" style="left:1089px;top:771px;width:18px;height:18px;border:1px solid #7e7e7e;background:#ececec;box-shadow:inset 1px 1px 0 #fff"><svg width="18" height="18" viewBox="0 0 18 18" style="left:-1px;top:-1px"><circle cx="9" cy="9" r="6" fill="#fff" stroke="#2020d0" stroke-width="1.100"/><circle cx="9" cy="9" r="3.600" fill="#f05050"/></svg></div>
<div class="a" style="left:1089px;top:796px;width:18px;height:18px;border:1px solid #7e7e7e;background:#ececec;box-shadow:inset 1px 1px 0 #fff"><svg width="18" height="18" viewBox="0 0 18 18" style="left:-1px;top:-1px"><circle cx="9" cy="9" r="6" fill="#fff" stroke="#2020d0" stroke-width="1.100"/><path d="M5.800,10Q9,14 12.200,10" fill="none" stroke="#2020d0" stroke-width="1.100"/><rect x="6.300" y="6.500" width="1.400" height="1.400" fill="#2020d0"/><rect x="10.300" y="6.500" width="1.400" height="1.400" fill="#2020d0"/></svg></div>
<div class="a" style="left:1089px;top:821px;width:18px;height:18px;border:1px solid #7e7e7e;background:#ececec;box-shadow:inset 1px 1px 0 #fff"><svg width="18" height="18" viewBox="0 0 18 18" style="left:-1px;top:-1px"><circle cx="9" cy="9" r="6" fill="#fff" stroke="#2020d0" stroke-width="1.100"/><path d="M7.800,7L9.300,6V12.500" fill="none" stroke="#2020d0" stroke-width="1.200"/></svg></div>
<div class="a" style="left:1151px;top:111px;width:230px;height:212px;background:#f3f3f3;border-radius:5px;overflow:hidden">
<div class="t" style="left:10px;top:8px;font-size:13px;color:#9a9a9a">데이타 보기</div>
<div class="a" style="left:210px;top:9px;width:19px;height:19px;background:#dfdfdf"></div><div class="t" style="left:216px;top:12px;font-size:11px;color:#f6f6f6">×</div>
<div class="a" style="left:0;top:32px;width:211px;height:19px;background:#f0f0f0;border-bottom:1px solid #a0a0a0"></div>
<div class="a" style="left:87px;top:33px;width:1px;height:17px;background:#a0a0a0"></div><div class="a" style="left:88px;top:33px;width:1px;height:17px;background:#fff"></div>
<div class="a" style="left:206px;top:33px;width:1px;height:17px;background:#a0a0a0"></div>
<div class="t" style="left:6px;top:36px;font-size:12px;letter-spacing:0.5px">항목</div><div class="t" style="right:25px;top:36px;font-size:12px">값</div>
<div class="a" style="left:0;top:51px;width:211px;height:161px;background:#fff"></div>
<div class="a" style="left:88px;top:51px;width:1px;height:161px;background:#ececec"></div>
<div class="a" style="left:0;top:68px;width:211px;height:1px;background:#ececec"></div>
<div class="t" style="left:4px;top:55px;font-size:12px;letter-spacing:0.5px">시가</div><div class="t" style="right:25px;top:55px;font-size:12px;letter-spacing:0.15px">358.18 (0.11%)</div>
<div class="a" style="left:0;top:84px;width:211px;height:1px;background:#ececec"></div>
<div class="t" style="left:4px;top:71px;font-size:12px;letter-spacing:0.5px">고가</div><div class="t" style="right:25px;top:71px;font-size:12px;letter-spacing:0.15px">358.20 (0.11%)</div>
<div class="a" style="left:0;top:100px;width:211px;height:1px;background:#ececec"></div>
<div class="t" style="left:4px;top:87px;font-size:12px;letter-spacing:0.5px">저가</div><div class="t" style="right:25px;top:87px;font-size:12px;letter-spacing:0.15px">357.18 (-0.17%)</div>
<div class="a" style="left:0;top:116px;width:211px;height:1px;background:#ececec"></div>
<div class="t" style="left:4px;top:103px;font-size:12px;letter-spacing:0.5px">종가</div><div class="t" style="right:25px;top:103px;font-size:12px;letter-spacing:0.15px">357.70 (-0.03%)</div>
<div class="a" style="left:0;top:132px;width:211px;height:1px;background:#ececec"></div>
<div class="a" style="left:0;top:148px;width:211px;height:1px;background:#ececec"></div>
<div class="t" style="left:4px;top:135px;font-size:12px;letter-spacing:0.5px">지표명</div><div class="t" style="right:25px;top:135px;font-size:12px;letter-spacing:0.5px">투자심리선</div>
<div class="a" style="left:0;top:164px;width:211px;height:1px;background:#ececec"></div>
<div class="t" style="left:4px;top:151px;font-size:12px;letter-spacing:0.5px">투자심리선</div><div class="t" style="right:25px;top:151px;font-size:12px;letter-spacing:0.15px">66.67</div>
<div class="a" style="left:0;top:180px;width:211px;height:1px;background:#ececec"></div>
<div class="t" style="left:4px;top:167px;font-size:12px;letter-spacing:0.5px">기준선1</div><div class="t" style="right:25px;top:167px;font-size:12px;letter-spacing:0.15px">25.00</div>
<div class="a" style="left:0;top:196px;width:211px;height:1px;background:#ececec"></div>
<div class="t" style="left:4px;top:183px;font-size:12px;letter-spacing:0.5px">기준선2</div><div class="t" style="right:25px;top:183px;font-size:12px;letter-spacing:0.15px">75.00</div>
<div class="a" style="left:0;top:212px;width:211px;height:1px;background:#ececec"></div>
<div class="a" style="left:221px;top:154px;width:2px;height:41px;background:#7a7a7a"></div>
</div>
<div class="a" style="left:1151px;top:351px;width:236px;height:162px;background:#f3f3f3;border-radius:5px 5px 2px 2px;overflow:hidden">
<div class="t" style="left:9px;top:8px;font-size:13px;letter-spacing:-0.1px;color:#9a9a9a">디버깅 창을 보이거나 숨깁니다.</div>
<div class="a" style="left:216px;top:8px;width:19px;height:19px;background:#dfdfdf"></div><div class="t" style="left:222px;top:11px;font-size:11px;color:#f6f6f6">×</div>
<div class="a" style="left:1px;top:30px;width:234px;height:132px;border:1px solid #6e6e6e;border-bottom:none;background:#f0f0f0"></div>
<div class="a" style="left:2px;top:55px;width:232px;height:1px;background:#a0a0a0"></div>
<svg width="50" height="22" viewBox="0 0 50 22" style="left:4px;top:33px"><path d="M5,4 H17 V13 Q15,17 9,17 H3 Q6,12 5,4Z" fill="#f3e36a" stroke="#b79d1a" stroke-width="0.8"/><circle cx="4" cy="6" r="2.2" fill="#3c6fd0"/><path d="M5,7 L9,9" stroke="#3c6fd0" stroke-width="1.5"/><g transform="translate(24,0)"><path d="M1,5H10M1,8H8M1,11H6M1,14H5M1,17H14" stroke="#555" stroke-width="1" stroke-dasharray="1.5,1"/><path d="M3,12 L11,4 L17,7 L9,16 Z" fill="#f0a088" stroke="#c0705a" stroke-width="0.7"/><path d="M3,12 L9,16 L8,17 L2.5,14Z" fill="#fbe0c8"/></g></svg>
<div class="a" style="left:2px;top:56px;width:215px;height:18px;background:#f0f0f0;border-bottom:1px solid #a0a0a0"></div>
<div class="a" style="left:150px;top:57px;width:1px;height:16px;background:#a0a0a0"></div><div class="a" style="left:151px;top:57px;width:1px;height:16px;background:#fff"></div>
<div class="t" style="left:8px;top:60px;font-size:12px;letter-spacing:0.5px">시간</div><div class="t" style="left:158px;top:60px;font-size:12px;letter-spacing:0.5px">내용</div>
<div class="a" style="left:2px;top:75px;width:215px;height:69px;background:#fff;border-radius:0 0 4px 4px"></div>
<div class="a" style="left:4px;top:125px;width:213px;height:15px;background:#f0f0f0"></div>
<div class="t" style="left:6px;top:79px;font-size:12px;letter-spacing:0.4px">2023-05-02 09:40:00</div><div class="t" style="left:158px;top:79px;font-size:12px;letter-spacing:0.3px">값 (null)</div>
<div class="t" style="left:6px;top:95px;font-size:12px;letter-spacing:0.4px">2023-05-02 10:40:00</div><div class="t" style="left:158px;top:95px;font-size:12px;letter-spacing:0.3px">값 (null)</div>
<div class="t" style="left:6px;top:111px;font-size:12px;letter-spacing:0.4px">2023-05-02 09:40:00</div><div class="t" style="left:158px;top:111px;font-size:12px;letter-spacing:0.3px">값 (null)</div>
<div class="t" style="left:6px;top:127px;font-size:12px;letter-spacing:0.4px">2023-05-02 10:40:00</div><div class="t" style="left:158px;top:127px;font-size:12px;letter-spacing:0.3px">값 (null)</div>
<div class="a" style="left:225px;top:109px;width:2px;height:17px;background:#6a6a6a"></div>
<div class="a" style="left:19px;top:151px;width:70px;height:2px;background:#7a7a7a"></div>
<svg width="12" height="12" viewBox="0 0 12 12" style="left:223px;top:148px"><g fill="#b0b0b0"><rect x="8" y="1" width="2" height="2"/><rect x="8" y="5" width="2" height="2"/><rect x="4" y="5" width="2" height="2"/><rect x="8" y="9" width="2" height="2"/><rect x="4" y="9" width="2" height="2"/><rect x="0" y="9" width="2" height="2"/></g></svg>
</div>
<div class="a" style="left:4px;top:858px;width:865px;height:20px;background:#c0c0c0"></div>
<div class="a" style="left:4px;top:858px;width:36px;height:20px;background:#a5c0da;border-right:1px solid #7f95ad"></div>
<div class="a" style="left:8px;top:864px;width:27px;height:8px;border-top:2px solid #d7e4f2;border-bottom:2px solid #d7e4f2;box-shadow:0 1px 0 #7893b3, 0 -1px 0 #7893b3 inset"></div>
<div class="a" style="left:40px;top:858px;width:16px;height:20px;background:#a5c0da;border-right:1px solid #8aa2bd"></div>
<div class="a" style="left:44px;top:863px;width:0;height:0;border-top:4.5px solid transparent;border-bottom:4.5px solid transparent;border-right:5px solid #000"></div>
<svg width="1388" height="883" viewBox="0 0 1388 883"><path d="M293,878 L293,870.0 L296,870.0 L296,871.0 L299,871.0 L299,871.0 L302,871.0 L302,870.0 L305,870.0 L305,869.5 L308,869.5 L308,870.5 L311,870.5 L311,870.0 L314,870.0 L314,870.5 L317,870.5 L317,868.5 L320,868.5 L320,870.5 L323,870.5 L323,868.5 L326,868.5 L326,869.5 L329,869.5 L329,868.5 L332,868.5 L332,869.0 L335,869.0 L335,867.5 L338,867.5 L338,867.5 L341,867.5 L341,867.5 L344,867.5 L344,867.5 L345,867.5 L345,867.0 L348,867.0 L348,867.0 L351,867.0 L351,867.0 L354,867.0 L354,866.5 L357,866.5 L357,866.5 L360,866.5 L360,866.5 L363,866.5 L363,867.0 L366,867.0 L366,867.0 L369,867.0 L369,866.0 L372,866.0 L372,866.0 L375,866.0 L375,867.0 L378,867.0 L378,868.0 L381,868.0 L381,867.0 L384,867.0 L384,867.5 L387,867.5 L387,867.0 L388,867.0 L388,868.0 L391,868.0 L391,868.5 L394,868.5 L394,868.5 L397,868.5 L397,868.0 L400,868.0 L400,868.0 L403,868.0 L403,868.0 L406,868.0 L406,868.0 L409,868.0 L409,867.5 L410,867.5 L410,867.0 L413,867.0 L413,867.0 L416,867.0 L416,866.0 L419,866.0 L419,866.0 L422,866.0 L422,866.5 L425,866.5 L425,867.0 L428,867.0 L428,866.5 L431,866.5 L431,866.0 L434,866.0 L434,866.5 L437,866.5 L437,866.0 L440,866.0 L440,866.5 L443,866.5 L443,867.0 L446,867.0 L446,867.0 L449,867.0 L449,868.0 L452,868.0 L452,867.5 L455,867.5 L455,868.5 L458,868.5 L458,869.0 L461,869.0 L461,869.0 L464,869.0 L464,870.0 L466,870.0 L466,869.5 L469,869.5 L469,869.5 L472,869.5 L472,869.0 L475,869.0 L475,869.5 L478,869.5 L478,870.5 L481,870.5 L481,870.0 L483,870.0 L483,870.0 L486,870.0 L486,870.5 L489,870.5 L489,870.5 L492,870.5 L492,870.5 L495,870.5 L495,868.5 L498,868.5 L498,869.0 L501,869.0 L501,869.5 L504,869.5 L504,868.5 L507,868.5 L507,868.5 L510,868.5 L510,867.5 L513,867.5 L513,867.0 L516,867.0 L516,868.0 L518,868.0 L518,868.0 L521,868.0 L521,867.0 L524,867.0 L524,868.5 L527,868.5 L527,868.0 L530,868.0 L530,869.5 L533,869.5 L533,869.5 L536,869.5 L536,869.0 L539,869.0 L539,870.0 L542,870.0 L542,870.5 L545,870.5 L545,871.0 L548,871.0 L548,870.0 L551,870.0 L551,870.0 L554,870.0 L554,872.0 L557,872.0 L557,872.0 L560,872.0 L560,870.5 L561,870.5 L561,872.0 L564,872.0 L564,873.0 L567,873.0 L567,872.5 L570,872.5 L570,874.0 L573,874.0 L573,874.0 L576,874.0 L576,875.5 L579,875.5 L579,875.0 L582,875.0 L582,875.0 L583,875.0 L583,876.0 L586,876.0 L586,874.0 L589,874.0 L589,873.0 L592,873.0 L592,872.0 L595,872.0 L595,872.5 L596,872.5 L596,872.5 L599,872.5 L599,870.5 L602,870.5 L602,871.0 L605,871.0 L605,871.5 L608,871.5 L608,871.0 L611,871.0 L611,871.5 L614,871.5 L614,870.5 L617,870.5 L617,870.5 L620,870.5 L620,869.5 L623,869.5 L623,870.0 L626,870.0 L626,870.0 L629,870.0 L629,870.0 L632,870.0 L632,869.5 L635,869.5 L635,870.0 L638,870.0 L638,870.0 L641,870.0 L641,869.5 L644,869.5 L644,870.0 L647,870.0 L647,869.5 L650,869.5 L650,869.5 L653,869.5 L653,869.5 L656,869.5 L656,867.5 L659,867.5 L659,869.0 L662,869.0 L662,868.5 L665,868.5 L665,867.0 L668,867.0 L668,867.0 L671,867.0 L671,866.0 L674,866.0 L674,865.5 L677,865.5 L677,865.5 L680,865.5 L680,864.5 L682,864.5 L682,865.0 L685,865.0 L685,864.5 L688,864.5 L688,865.5 L691,865.5 L691,865.0 L694,865.0 L694,865.0 L695,865.0 L695,866.5 L698,866.5 L698,867.5 L701,867.5 L701,867.5 L704,867.5 L704,867.5 L707,867.5 L707,869.5 L710,869.5 L710,870.5 L712,870.5 L712,871.0 L715,871.0 L715,870.0 L718,870.0 L718,869.0 L721,869.0 L721,869.5 L724,869.5 L724,869.5 L727,869.5 L727,869.0 L730,869.0 L730,868.5 L733,868.5 L733,869.5 L734,869.5 L734,868.5 L737,868.5 L737,868.5 L740,868.5 L740,866.5 L743,866.5 L743,867.5 L746,867.5 L746,865.5 L749,865.5 L749,864.5 L752,864.5 L752,865.0 L755,865.0 L755,864.0 L756,864.0 L756,864.5 L759,864.5 L759,864.0 L762,864.0 L762,864.5 L765,864.5 L765,864.5 L768,864.5 L768,863.5 L771,863.5 L771,863.5 L774,863.5 L774,863.5 L777,863.5 L777,863.5 L780,863.5 L780,863.5 L783,863.5 L783,863.0 L786,863.0 L786,864.0 L789,864.0 L789,863.0 L792,863.0 L792,863.0 L795,863.0 L795,863.5 L798,863.5 L798,862.0 L799,862.0 L799,862.0 L802,862.0 L802,863.0 L805,863.0 L805,861.5 L808,861.5 L808,860.5 L811,860.5 L811,860.5 L814,860.5 L814,859.0 L816,859.0 L816,858.5 L819,858.5 L819,858.5 L822,858.5 L822,858.5 L825,858.5 L825,858.5 L828,858.5 L828,859.0 L831,859.0 L831,858.0 L834,858.0 L834,858.0 L837,858.0 L837,859.5 L840,859.5 L840,858.5 L843,858.5 L843,858.5 L846,858.5 L846,858.5 L849,858.5 L849,859.0 L852,859.0 L852,858.5 L854,858.5 L854,878 Z" fill="#4f4f4f"/><rect x="854" y="858" width="15" height="20" fill="#2e2e2e"/><rect x="854.5" y="859.5" width="3" height="17" rx="1.2" fill="#e0e0e0" stroke="#333" stroke-width="0.8"/><rect x="865.5" y="859.5" width="3" height="17" rx="1.2" fill="#e0e0e0" stroke="#333" stroke-width="0.8"/><g fill="#000"><path d="M875,864 v8 l5,-4z"/><path d="M889,868 l5,-4 v8z M894,868 l5,-4 v8z"/><path d="M908,864 v8 l5,-4z M913,864 v8 l5,-4z"/></g><g stroke="#8ea9c6" stroke-width="1"><path d="M886.5,859V878M904.5,859V878"/></g><g stroke="#c4d6e8" stroke-width="1"><path d="M887.5,859V878M905.5,859V878"/></g><path d="M978.5,868 l5.5,-6 v12z M990.5,868 l-5.500,-6 v12z" fill="#000"/><path d="M996.5,862 v12 l6,-6z M1008.500,862 v12 l-6,-6z" fill="#000"/><circle cx="1020" cy="868" r="5" fill="#fff" stroke="#000" stroke-width="1.3"/><path d="M1017,868h6M1020,865v6" stroke="#000" stroke-width="1.2"/><circle cx="1039" cy="868" r="5" fill="#c3d4e6" stroke="#e4ecf5" stroke-width="1.3"/><path d="M1035,868h8" stroke="#e4ecf5" stroke-width="1.4"/><rect x="1050.500" y="862.500" width="11" height="11" fill="#c3d4e6" stroke="#e4ecf5"/><path d="M1052,864l8,8m0,-8l-8,8M1056,863v10M1051,868h10" stroke="#e4ecf5" stroke-width="1"/><rect x="1069" y="863" width="10" height="10" fill="#fff" stroke="#000" stroke-width="1.6"/><path d="M1070,864l8,8m0,-8l-8,8" stroke="#000" stroke-width="1"/></svg>
<div class="inp" style="left:923px;top:859px;width:52px;height:18px;border-color:#8a9bb0"><span class="t" style="right:3px;top:2px;font-size:12.5px">203</span></div>
<div class="a" style="left:992px;top:839px;width:14px;height:14px;border:1px solid #555;background:#f4f4f4"></div><div class="a" style="left:1010px;top:839px;width:14px;height:14px;border:1px solid #555;background:#f4f4f4"></div>
<svg width="1388" height="883" viewBox="0 0 1388 883"><path d="M995,850 l1,-3 l5.500,-5.500 l2,2 l-5.500,5.500 z M995,851 h8" fill="none" stroke="#222" stroke-width="1"/><circle cx="1015.500" cy="844.500" r="2.800" fill="#fff" stroke="#000" stroke-width="1.600"/><path d="M1017.500,847 l3.500,3.500" stroke="#000" stroke-width="2"/></svg>
</body></html>
